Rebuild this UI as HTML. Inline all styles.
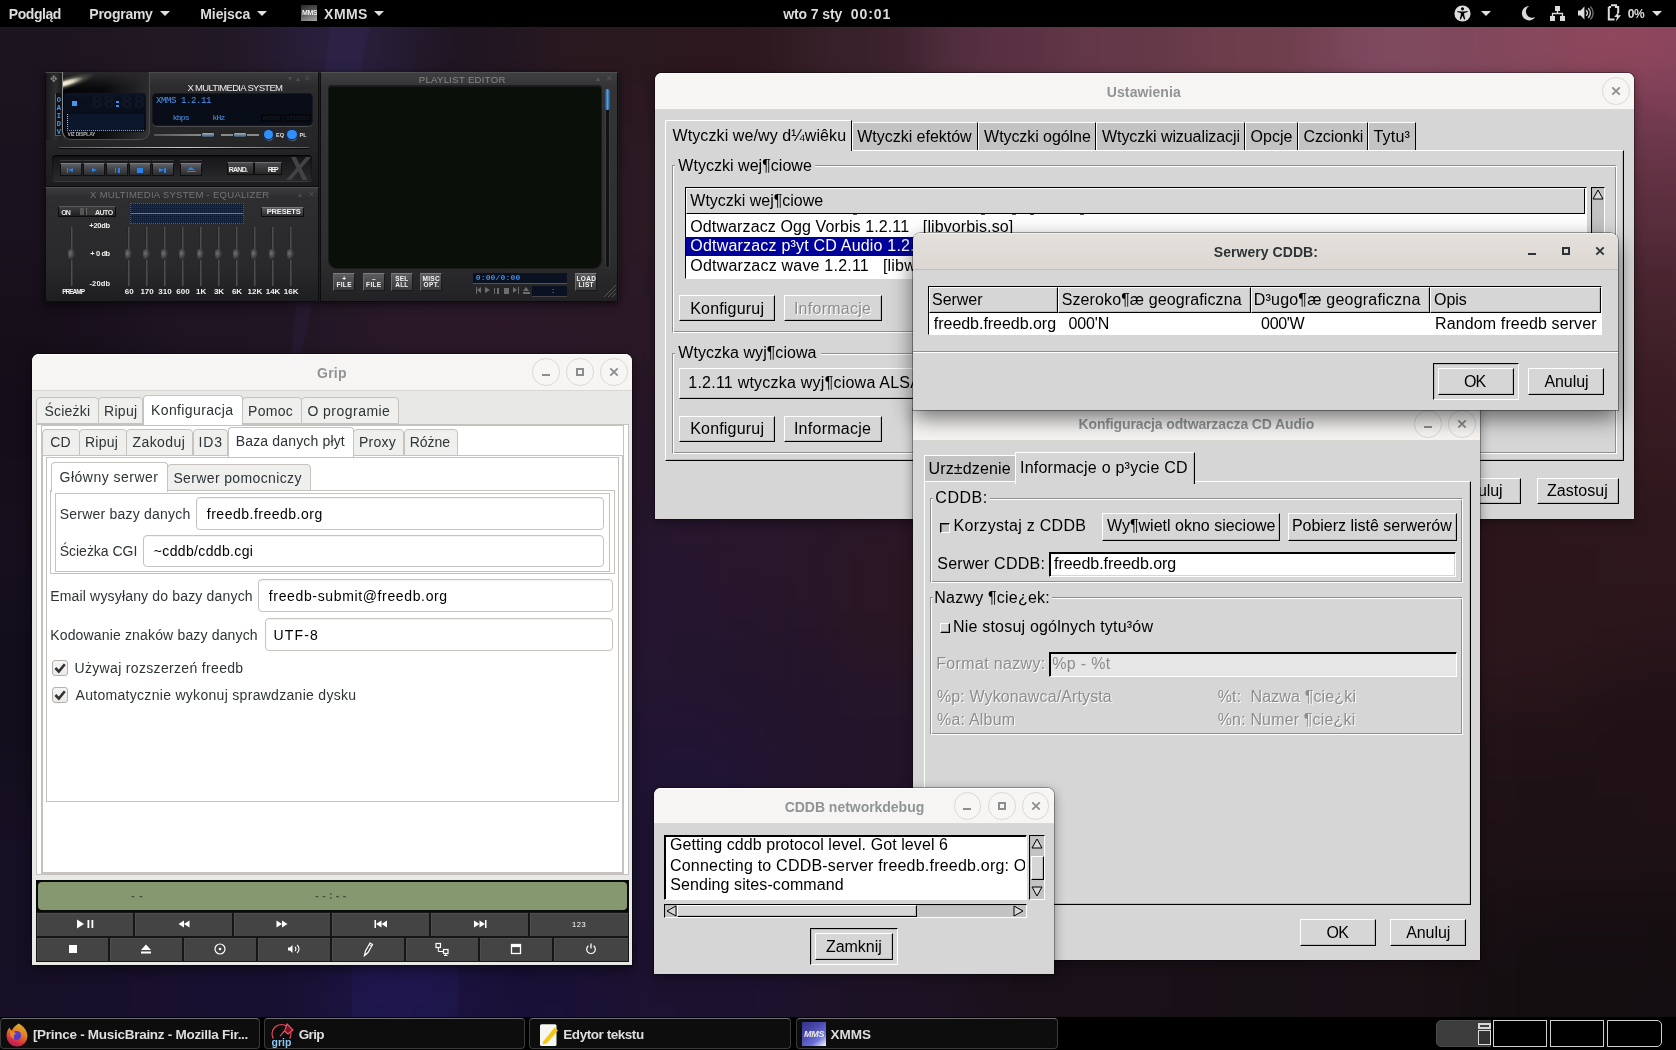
<!DOCTYPE html>
<html><head><meta charset="utf-8"><title>desktop</title>
<style>
*{box-sizing:border-box;margin:0;padding:0}
html,body{width:1676px;height:1050px;overflow:hidden;background:#1a1018}
body{font-family:"Liberation Sans",sans-serif;position:relative}
.abs,.abs *{position:absolute}
#desk{position:absolute;left:0;top:0;width:1676px;height:1050px;overflow:hidden;background:#1c1220;will-change:transform;transform:translateZ(0)}
/* ---------- top bar ---------- */
#top{position:absolute;left:0;top:0;width:1676px;height:27px;background:#000;color:#e9e9e9;font-weight:bold;font-size:14.5px}
#top span{position:absolute;top:5px;white-space:nowrap}
.tri{position:absolute;width:0;height:0;border-left:5px solid transparent;border-right:5px solid transparent;border-top:5px solid #e0e0e0}
/* ---------- bottom bar ---------- */
#bot{position:absolute;left:0;top:1017px;width:1676px;height:33px;background:#000}
.task{position:absolute;top:1px;height:31px;border:1px solid #3b3b3b;border-top-color:#6e6e6e;border-radius:4px;background:#0d0d0d;color:#e6e6e6;font-weight:bold;font-size:14px}
.task span{position:absolute;top:8px;white-space:nowrap}
/* ---------- generic windows ---------- */
.win{position:absolute;background:#d6d6d6;box-shadow:0 0 0 1px rgba(0,0,0,.35),0 6px 18px rgba(0,0,0,.45)}
.tb{position:absolute;left:0;top:0;right:0;background:#f6f5f4;border-radius:8px 8px 0 0;border-bottom:1px solid #dad6d2}
.tb .t{position:absolute;left:0;right:0;text-align:center;font-weight:bold;font-size:15px;color:#929595;white-space:nowrap}
.cb{position:absolute;width:24px;height:24px;border-radius:50%;border:1px solid #d6d1cd;background:#f6f5f4}
.g1{font-size:17px;color:#000;white-space:nowrap;position:absolute}
.btn1{position:absolute;background:#d6d6d6;border:1px solid;border-color:#fff #000 #000 #fff;box-shadow:inset -1px -1px 0 #8f8f8f;font-size:17px;text-align:center;white-space:nowrap;color:#000}
.frame{position:absolute;border:1px solid;border-color:#8f8f8f #fff #fff #8f8f8f;box-shadow:inset 1px 1px 0 #fff,1px 1px 0 #8f8f8f00}
.frame>b{position:absolute;top:-11px;left:4px;background:#d6d6d6;font-weight:normal;font-size:17px;padding:0 1px;white-space:nowrap;line-height:20px}
</style></head><body>
<div id="desk">

<svg style="position:absolute;left:0;top:0" width="1676" height="1050" viewBox="0 0 1676 1050"><defs><filter id="bgb" color-interpolation-filters="sRGB" x="-10%" y="-10%" width="120%" height="120%"><feGaussianBlur stdDeviation="26"/></filter></defs><rect width="1676" height="1050" fill="#1c1220"/><g filter="url(#bgb)"><rect x="-84" y="-84" width="43" height="43" fill="#1d1420"/><rect x="-42" y="-84" width="43" height="43" fill="#1d1420"/><rect x="0" y="-84" width="43" height="43" fill="#1d1520"/><rect x="42" y="-84" width="43" height="43" fill="#1e1521"/><rect x="84" y="-84" width="43" height="43" fill="#1f1623"/><rect x="126" y="-84" width="43" height="43" fill="#211725"/><rect x="168" y="-84" width="43" height="43" fill="#221826"/><rect x="210" y="-84" width="43" height="43" fill="#231929"/><rect x="252" y="-84" width="43" height="43" fill="#251a2e"/><rect x="294" y="-84" width="43" height="43" fill="#261c32"/><rect x="336" y="-84" width="43" height="43" fill="#261c33"/><rect x="378" y="-84" width="43" height="43" fill="#251a2f"/><rect x="420" y="-84" width="43" height="43" fill="#241929"/><rect x="462" y="-84" width="43" height="43" fill="#241825"/><rect x="504" y="-84" width="43" height="43" fill="#261824"/><rect x="546" y="-84" width="43" height="43" fill="#281822"/><rect x="588" y="-84" width="43" height="43" fill="#2a1921"/><rect x="630" y="-84" width="43" height="43" fill="#2b1921"/><rect x="672" y="-84" width="43" height="43" fill="#2d1921"/><rect x="714" y="-84" width="43" height="43" fill="#2f1a22"/><rect x="756" y="-84" width="43" height="43" fill="#331d25"/><rect x="798" y="-84" width="43" height="43" fill="#38202a"/><rect x="840" y="-84" width="43" height="43" fill="#3d232e"/><rect x="882" y="-84" width="43" height="43" fill="#432633"/><rect x="924" y="-84" width="43" height="43" fill="#4a2a38"/><rect x="966" y="-84" width="43" height="43" fill="#512d3c"/><rect x="1008" y="-84" width="43" height="43" fill="#563040"/><rect x="1050" y="-84" width="43" height="43" fill="#5b3343"/><rect x="1092" y="-84" width="43" height="43" fill="#5f3545"/><rect x="1134" y="-84" width="43" height="43" fill="#623746"/><rect x="1176" y="-84" width="43" height="43" fill="#663949"/><rect x="1218" y="-84" width="43" height="43" fill="#6a3c4b"/><rect x="1260" y="-84" width="43" height="43" fill="#6d3d4d"/><rect x="1302" y="-84" width="43" height="43" fill="#724052"/><rect x="1344" y="-84" width="43" height="43" fill="#774356"/><rect x="1386" y="-84" width="43" height="43" fill="#7a4458"/><rect x="1428" y="-84" width="43" height="43" fill="#7c4458"/><rect x="1470" y="-84" width="43" height="43" fill="#7f4458"/><rect x="1512" y="-84" width="43" height="43" fill="#824458"/><rect x="1554" y="-84" width="43" height="43" fill="#854458"/><rect x="1596" y="-84" width="43" height="43" fill="#874459"/><rect x="1638" y="-84" width="43" height="43" fill="#864459"/><rect x="1680" y="-84" width="43" height="43" fill="#844358"/><rect x="1722" y="-84" width="43" height="43" fill="#814157"/><rect x="-84" y="-42" width="43" height="43" fill="#1d141f"/><rect x="-42" y="-42" width="43" height="43" fill="#1c141f"/><rect x="0" y="-42" width="43" height="43" fill="#1c141f"/><rect x="42" y="-42" width="43" height="43" fill="#1d151f"/><rect x="84" y="-42" width="43" height="43" fill="#1f1622"/><rect x="126" y="-42" width="43" height="43" fill="#211724"/><rect x="168" y="-42" width="43" height="43" fill="#211825"/><rect x="210" y="-42" width="43" height="43" fill="#221927"/><rect x="252" y="-42" width="43" height="43" fill="#251b2f"/><rect x="294" y="-42" width="43" height="43" fill="#281e38"/><rect x="336" y="-42" width="43" height="43" fill="#281e39"/><rect x="378" y="-42" width="43" height="43" fill="#251b31"/><rect x="420" y="-42" width="43" height="43" fill="#221726"/><rect x="462" y="-42" width="43" height="43" fill="#211723"/><rect x="504" y="-42" width="43" height="43" fill="#251722"/><rect x="546" y="-42" width="43" height="43" fill="#291821"/><rect x="588" y="-42" width="43" height="43" fill="#2a1820"/><rect x="630" y="-42" width="43" height="43" fill="#2b1820"/><rect x="672" y="-42" width="43" height="43" fill="#2c181f"/><rect x="714" y="-42" width="43" height="43" fill="#2d191f"/><rect x="756" y="-42" width="43" height="43" fill="#301b23"/><rect x="798" y="-42" width="43" height="43" fill="#371f29"/><rect x="840" y="-42" width="43" height="43" fill="#3b222d"/><rect x="882" y="-42" width="43" height="43" fill="#402531"/><rect x="924" y="-42" width="43" height="43" fill="#4d2b3a"/><rect x="966" y="-42" width="43" height="43" fill="#542e3f"/><rect x="1008" y="-42" width="43" height="43" fill="#593142"/><rect x="1050" y="-42" width="43" height="43" fill="#5f3545"/><rect x="1092" y="-42" width="43" height="43" fill="#623747"/><rect x="1134" y="-42" width="43" height="43" fill="#643848"/><rect x="1176" y="-42" width="43" height="43" fill="#693b4a"/><rect x="1218" y="-42" width="43" height="43" fill="#6c3d4c"/><rect x="1260" y="-42" width="43" height="43" fill="#6e3e4d"/><rect x="1302" y="-42" width="43" height="43" fill="#744153"/><rect x="1344" y="-42" width="43" height="43" fill="#7b465a"/><rect x="1386" y="-42" width="43" height="43" fill="#7d475c"/><rect x="1428" y="-42" width="43" height="43" fill="#7e475b"/><rect x="1470" y="-42" width="43" height="43" fill="#81465a"/><rect x="1512" y="-42" width="43" height="43" fill="#84465a"/><rect x="1554" y="-42" width="43" height="43" fill="#88465a"/><rect x="1596" y="-42" width="43" height="43" fill="#8c465a"/><rect x="1638" y="-42" width="43" height="43" fill="#8b455a"/><rect x="1680" y="-42" width="43" height="43" fill="#87445a"/><rect x="1722" y="-42" width="43" height="43" fill="#834258"/><rect x="-84" y="0" width="43" height="43" fill="#1c141f"/><rect x="-42" y="0" width="43" height="43" fill="#1c141e"/><rect x="0" y="0" width="43" height="43" fill="#1c141e"/><rect x="42" y="0" width="43" height="43" fill="#1c141f"/><rect x="84" y="0" width="43" height="43" fill="#1e1621"/><rect x="126" y="0" width="43" height="43" fill="#211824"/><rect x="168" y="0" width="43" height="43" fill="#211824"/><rect x="210" y="0" width="43" height="43" fill="#211825"/><rect x="252" y="0" width="43" height="43" fill="#251b30"/><rect x="294" y="0" width="43" height="43" fill="#291f3d"/><rect x="336" y="0" width="43" height="43" fill="#2a203f"/><rect x="378" y="0" width="43" height="43" fill="#261c34"/><rect x="420" y="0" width="43" height="43" fill="#1f1622"/><rect x="462" y="0" width="43" height="43" fill="#1f1521"/><rect x="504" y="0" width="43" height="43" fill="#241721"/><rect x="546" y="0" width="43" height="43" fill="#29181f"/><rect x="588" y="0" width="43" height="43" fill="#2a181f"/><rect x="630" y="0" width="43" height="43" fill="#2a181f"/><rect x="672" y="0" width="43" height="43" fill="#2b171d"/><rect x="714" y="0" width="43" height="43" fill="#2b171d"/><rect x="756" y="0" width="43" height="43" fill="#2e1920"/><rect x="798" y="0" width="43" height="43" fill="#372029"/><rect x="840" y="0" width="43" height="43" fill="#39212b"/><rect x="882" y="0" width="43" height="43" fill="#3b222d"/><rect x="924" y="0" width="43" height="43" fill="#512d3d"/><rect x="966" y="0" width="43" height="43" fill="#573041"/><rect x="1008" y="0" width="43" height="43" fill="#5a3143"/><rect x="1050" y="0" width="43" height="43" fill="#623747"/><rect x="1092" y="0" width="43" height="43" fill="#643848"/><rect x="1134" y="0" width="43" height="43" fill="#653848"/><rect x="1176" y="0" width="43" height="43" fill="#6b3c4b"/><rect x="1218" y="0" width="43" height="43" fill="#6e3e4c"/><rect x="1260" y="0" width="43" height="43" fill="#6e3e4d"/><rect x="1302" y="0" width="43" height="43" fill="#754254"/><rect x="1344" y="0" width="43" height="43" fill="#7e495e"/><rect x="1386" y="0" width="43" height="43" fill="#804a5f"/><rect x="1428" y="0" width="43" height="43" fill="#7f485e"/><rect x="1470" y="0" width="43" height="43" fill="#83475b"/><rect x="1512" y="0" width="43" height="43" fill="#85485c"/><rect x="1554" y="0" width="43" height="43" fill="#88475b"/><rect x="1596" y="0" width="43" height="43" fill="#92485b"/><rect x="1638" y="0" width="43" height="43" fill="#8e465c"/><rect x="1680" y="0" width="43" height="43" fill="#88455c"/><rect x="1722" y="0" width="43" height="43" fill="#844259"/><rect x="-84" y="42" width="43" height="43" fill="#1c141e"/><rect x="-42" y="42" width="43" height="43" fill="#1c141e"/><rect x="0" y="42" width="43" height="43" fill="#1c141e"/><rect x="42" y="42" width="43" height="43" fill="#1c141e"/><rect x="84" y="42" width="43" height="43" fill="#1e1521"/><rect x="126" y="42" width="43" height="43" fill="#211824"/><rect x="168" y="42" width="43" height="43" fill="#211824"/><rect x="210" y="42" width="43" height="43" fill="#211825"/><rect x="252" y="42" width="43" height="43" fill="#251b2f"/><rect x="294" y="42" width="43" height="43" fill="#291f3d"/><rect x="336" y="42" width="43" height="43" fill="#2a203f"/><rect x="378" y="42" width="43" height="43" fill="#251c33"/><rect x="420" y="42" width="43" height="43" fill="#1e1521"/><rect x="462" y="42" width="43" height="43" fill="#1e1520"/><rect x="504" y="42" width="43" height="43" fill="#241721"/><rect x="546" y="42" width="43" height="43" fill="#2a181f"/><rect x="588" y="42" width="43" height="43" fill="#2a181f"/><rect x="630" y="42" width="43" height="43" fill="#2a181f"/><rect x="672" y="42" width="43" height="43" fill="#2b171c"/><rect x="714" y="42" width="43" height="43" fill="#2b171c"/><rect x="756" y="42" width="43" height="43" fill="#2e1920"/><rect x="798" y="42" width="43" height="43" fill="#372029"/><rect x="840" y="42" width="43" height="43" fill="#38212b"/><rect x="882" y="42" width="43" height="43" fill="#3a222c"/><rect x="924" y="42" width="43" height="43" fill="#522d3e"/><rect x="966" y="42" width="43" height="43" fill="#583042"/><rect x="1008" y="42" width="43" height="43" fill="#5a3143"/><rect x="1050" y="42" width="43" height="43" fill="#633747"/><rect x="1092" y="42" width="43" height="43" fill="#643848"/><rect x="1134" y="42" width="43" height="43" fill="#643848"/><rect x="1176" y="42" width="43" height="43" fill="#6b3c4b"/><rect x="1218" y="42" width="43" height="43" fill="#6e3e4c"/><rect x="1260" y="42" width="43" height="43" fill="#6e3e4c"/><rect x="1302" y="42" width="43" height="43" fill="#744254"/><rect x="1344" y="42" width="43" height="43" fill="#7f495f"/><rect x="1386" y="42" width="43" height="43" fill="#804a60"/><rect x="1428" y="42" width="43" height="43" fill="#7f485e"/><rect x="1470" y="42" width="43" height="43" fill="#83475b"/><rect x="1512" y="42" width="43" height="43" fill="#85485c"/><rect x="1554" y="42" width="43" height="43" fill="#87475b"/><rect x="1596" y="42" width="43" height="43" fill="#90475a"/><rect x="1638" y="42" width="43" height="43" fill="#89455d"/><rect x="1680" y="42" width="43" height="43" fill="#86445d"/><rect x="1722" y="42" width="43" height="43" fill="#814158"/><rect x="-84" y="84" width="43" height="43" fill="#1b131e"/><rect x="-42" y="84" width="43" height="43" fill="#1b131e"/><rect x="0" y="84" width="43" height="43" fill="#1c141e"/><rect x="42" y="84" width="43" height="43" fill="#1c141f"/><rect x="84" y="84" width="43" height="43" fill="#1d1521"/><rect x="126" y="84" width="43" height="43" fill="#201723"/><rect x="168" y="84" width="43" height="43" fill="#211824"/><rect x="210" y="84" width="43" height="43" fill="#221826"/><rect x="252" y="84" width="43" height="43" fill="#241a2c"/><rect x="294" y="84" width="43" height="43" fill="#261c34"/><rect x="336" y="84" width="43" height="43" fill="#271d38"/><rect x="378" y="84" width="43" height="43" fill="#251a2f"/><rect x="420" y="84" width="43" height="43" fill="#211724"/><rect x="462" y="84" width="43" height="43" fill="#211622"/><rect x="504" y="84" width="43" height="43" fill="#251722"/><rect x="546" y="84" width="43" height="43" fill="#291821"/><rect x="588" y="84" width="43" height="43" fill="#2a1820"/><rect x="630" y="84" width="43" height="43" fill="#2b1820"/><rect x="672" y="84" width="43" height="43" fill="#2b181f"/><rect x="714" y="84" width="43" height="43" fill="#2c181e"/><rect x="756" y="84" width="43" height="43" fill="#2f1a22"/><rect x="798" y="84" width="43" height="43" fill="#361f29"/><rect x="840" y="84" width="43" height="43" fill="#3a222c"/><rect x="882" y="84" width="43" height="43" fill="#3e242f"/><rect x="924" y="84" width="43" height="43" fill="#4d2b3a"/><rect x="966" y="84" width="43" height="43" fill="#552f40"/><rect x="1008" y="84" width="43" height="43" fill="#583141"/><rect x="1050" y="84" width="43" height="43" fill="#603545"/><rect x="1092" y="84" width="43" height="43" fill="#623747"/><rect x="1134" y="84" width="43" height="43" fill="#633847"/><rect x="1176" y="84" width="43" height="43" fill="#693b49"/><rect x="1218" y="84" width="43" height="43" fill="#6c3d4b"/><rect x="1260" y="84" width="43" height="43" fill="#6d3e4c"/><rect x="1302" y="84" width="43" height="43" fill="#724152"/><rect x="1344" y="84" width="43" height="43" fill="#7b465b"/><rect x="1386" y="84" width="43" height="43" fill="#7d485d"/><rect x="1428" y="84" width="43" height="43" fill="#7d465b"/><rect x="1470" y="84" width="43" height="43" fill="#7f4559"/><rect x="1512" y="84" width="43" height="43" fill="#824559"/><rect x="1554" y="84" width="43" height="43" fill="#804257"/><rect x="1596" y="84" width="43" height="43" fill="#793d53"/><rect x="1638" y="84" width="43" height="43" fill="#723a50"/><rect x="1680" y="84" width="43" height="43" fill="#7a3e54"/><rect x="1722" y="84" width="43" height="43" fill="#7a3e54"/><rect x="-84" y="126" width="43" height="43" fill="#1b131e"/><rect x="-42" y="126" width="43" height="43" fill="#1a121e"/><rect x="0" y="126" width="43" height="43" fill="#1a121e"/><rect x="42" y="126" width="43" height="43" fill="#1b121e"/><rect x="84" y="126" width="43" height="43" fill="#1c1420"/><rect x="126" y="126" width="43" height="43" fill="#1f1623"/><rect x="168" y="126" width="43" height="43" fill="#211725"/><rect x="210" y="126" width="43" height="43" fill="#221827"/><rect x="252" y="126" width="43" height="43" fill="#221827"/><rect x="294" y="126" width="43" height="43" fill="#231928"/><rect x="336" y="126" width="43" height="43" fill="#24192b"/><rect x="378" y="126" width="43" height="43" fill="#24192b"/><rect x="420" y="126" width="43" height="43" fill="#231827"/><rect x="462" y="126" width="43" height="43" fill="#241825"/><rect x="504" y="126" width="43" height="43" fill="#271824"/><rect x="546" y="126" width="43" height="43" fill="#291923"/><rect x="588" y="126" width="43" height="43" fill="#2b1923"/><rect x="630" y="126" width="43" height="43" fill="#2b1a23"/><rect x="672" y="126" width="43" height="43" fill="#2c1923"/><rect x="714" y="126" width="43" height="43" fill="#2d1a22"/><rect x="756" y="126" width="43" height="43" fill="#301b25"/><rect x="798" y="126" width="43" height="43" fill="#361f29"/><rect x="840" y="126" width="43" height="43" fill="#3b222d"/><rect x="882" y="126" width="43" height="43" fill="#412531"/><rect x="924" y="126" width="43" height="43" fill="#482837"/><rect x="966" y="126" width="43" height="43" fill="#4e2b3b"/><rect x="1008" y="126" width="43" height="43" fill="#532e3d"/><rect x="1050" y="126" width="43" height="43" fill="#583140"/><rect x="1092" y="126" width="43" height="43" fill="#5c3343"/><rect x="1134" y="126" width="43" height="43" fill="#5f3544"/><rect x="1176" y="126" width="43" height="43" fill="#623746"/><rect x="1218" y="126" width="43" height="43" fill="#663948"/><rect x="1260" y="126" width="43" height="43" fill="#673a49"/><rect x="1302" y="126" width="43" height="43" fill="#6a3c4c"/><rect x="1344" y="126" width="43" height="43" fill="#713f52"/><rect x="1386" y="126" width="43" height="43" fill="#754155"/><rect x="1428" y="126" width="43" height="43" fill="#764154"/><rect x="1470" y="126" width="43" height="43" fill="#774053"/><rect x="1512" y="126" width="43" height="43" fill="#773f52"/><rect x="1554" y="126" width="43" height="43" fill="#733b4e"/><rect x="1596" y="126" width="43" height="43" fill="#6e384b"/><rect x="1638" y="126" width="43" height="43" fill="#6b374a"/><rect x="1680" y="126" width="43" height="43" fill="#6d374b"/><rect x="1722" y="126" width="43" height="43" fill="#6f384c"/><rect x="-84" y="168" width="43" height="43" fill="#1a121e"/><rect x="-42" y="168" width="43" height="43" fill="#1a121e"/><rect x="0" y="168" width="43" height="43" fill="#1a121e"/><rect x="42" y="168" width="43" height="43" fill="#1a121e"/><rect x="84" y="168" width="43" height="43" fill="#1b131f"/><rect x="126" y="168" width="43" height="43" fill="#1e1522"/><rect x="168" y="168" width="43" height="43" fill="#201624"/><rect x="210" y="168" width="43" height="43" fill="#221726"/><rect x="252" y="168" width="43" height="43" fill="#221826"/><rect x="294" y="168" width="43" height="43" fill="#221826"/><rect x="336" y="168" width="43" height="43" fill="#231827"/><rect x="378" y="168" width="43" height="43" fill="#241828"/><rect x="420" y="168" width="43" height="43" fill="#251827"/><rect x="462" y="168" width="43" height="43" fill="#271826"/><rect x="504" y="168" width="43" height="43" fill="#281925"/><rect x="546" y="168" width="43" height="43" fill="#2a1924"/><rect x="588" y="168" width="43" height="43" fill="#2b1a24"/><rect x="630" y="168" width="43" height="43" fill="#2b1a24"/><rect x="672" y="168" width="43" height="43" fill="#2b1a24"/><rect x="714" y="168" width="43" height="43" fill="#2d1a25"/><rect x="756" y="168" width="43" height="43" fill="#301c26"/><rect x="798" y="168" width="43" height="43" fill="#351e29"/><rect x="840" y="168" width="43" height="43" fill="#3a212d"/><rect x="882" y="168" width="43" height="43" fill="#3e2330"/><rect x="924" y="168" width="43" height="43" fill="#422532"/><rect x="966" y="168" width="43" height="43" fill="#452633"/><rect x="1008" y="168" width="43" height="43" fill="#482735"/><rect x="1050" y="168" width="43" height="43" fill="#4d2a38"/><rect x="1092" y="168" width="43" height="43" fill="#522e3c"/><rect x="1134" y="168" width="43" height="43" fill="#56303e"/><rect x="1176" y="168" width="43" height="43" fill="#593140"/><rect x="1218" y="168" width="43" height="43" fill="#5a3140"/><rect x="1260" y="168" width="43" height="43" fill="#59313f"/><rect x="1302" y="168" width="43" height="43" fill="#5b3241"/><rect x="1344" y="168" width="43" height="43" fill="#613645"/><rect x="1386" y="168" width="43" height="43" fill="#67394a"/><rect x="1428" y="168" width="43" height="43" fill="#6b3a4b"/><rect x="1470" y="168" width="43" height="43" fill="#6c394b"/><rect x="1512" y="168" width="43" height="43" fill="#6a3748"/><rect x="1554" y="168" width="43" height="43" fill="#643445"/><rect x="1596" y="168" width="43" height="43" fill="#5d3040"/><rect x="1638" y="168" width="43" height="43" fill="#5a2e3e"/><rect x="1680" y="168" width="43" height="43" fill="#5e3040"/><rect x="1722" y="168" width="43" height="43" fill="#623243"/><rect x="-84" y="210" width="43" height="43" fill="#1a121e"/><rect x="-42" y="210" width="43" height="43" fill="#1a121e"/><rect x="0" y="210" width="43" height="43" fill="#1a121e"/><rect x="42" y="210" width="43" height="43" fill="#1a121e"/><rect x="84" y="210" width="43" height="43" fill="#1b121f"/><rect x="126" y="210" width="43" height="43" fill="#1d1421"/><rect x="168" y="210" width="43" height="43" fill="#1f1523"/><rect x="210" y="210" width="43" height="43" fill="#211725"/><rect x="252" y="210" width="43" height="43" fill="#221826"/><rect x="294" y="210" width="43" height="43" fill="#221826"/><rect x="336" y="210" width="43" height="43" fill="#231827"/><rect x="378" y="210" width="43" height="43" fill="#251827"/><rect x="420" y="210" width="43" height="43" fill="#271828"/><rect x="462" y="210" width="43" height="43" fill="#281827"/><rect x="504" y="210" width="43" height="43" fill="#291926"/><rect x="546" y="210" width="43" height="43" fill="#2a1925"/><rect x="588" y="210" width="43" height="43" fill="#2b1a24"/><rect x="630" y="210" width="43" height="43" fill="#2b1a24"/><rect x="672" y="210" width="43" height="43" fill="#2b1a25"/><rect x="714" y="210" width="43" height="43" fill="#2c1a25"/><rect x="756" y="210" width="43" height="43" fill="#2f1b27"/><rect x="798" y="210" width="43" height="43" fill="#331d2a"/><rect x="840" y="210" width="43" height="43" fill="#381f2c"/><rect x="882" y="210" width="43" height="43" fill="#3b212d"/><rect x="924" y="210" width="43" height="43" fill="#3c212d"/><rect x="966" y="210" width="43" height="43" fill="#3c212c"/><rect x="1008" y="210" width="43" height="43" fill="#3e212d"/><rect x="1050" y="210" width="43" height="43" fill="#422430"/><rect x="1092" y="210" width="43" height="43" fill="#492835"/><rect x="1134" y="210" width="43" height="43" fill="#4e2b38"/><rect x="1176" y="210" width="43" height="43" fill="#502c39"/><rect x="1218" y="210" width="43" height="43" fill="#4f2b38"/><rect x="1260" y="210" width="43" height="43" fill="#4d2a37"/><rect x="1302" y="210" width="43" height="43" fill="#4e2a37"/><rect x="1344" y="210" width="43" height="43" fill="#532d3a"/><rect x="1386" y="210" width="43" height="43" fill="#5a313f"/><rect x="1428" y="210" width="43" height="43" fill="#5f3342"/><rect x="1470" y="210" width="43" height="43" fill="#603242"/><rect x="1512" y="210" width="43" height="43" fill="#5e3040"/><rect x="1554" y="210" width="43" height="43" fill="#5a2e3d"/><rect x="1596" y="210" width="43" height="43" fill="#582d3c"/><rect x="1638" y="210" width="43" height="43" fill="#592d3d"/><rect x="1680" y="210" width="43" height="43" fill="#582d3c"/><rect x="1722" y="210" width="43" height="43" fill="#592d3c"/><rect x="-84" y="252" width="43" height="43" fill="#19111d"/><rect x="-42" y="252" width="43" height="43" fill="#18101c"/><rect x="0" y="252" width="43" height="43" fill="#18101b"/><rect x="42" y="252" width="43" height="43" fill="#18101b"/><rect x="84" y="252" width="43" height="43" fill="#19111d"/><rect x="126" y="252" width="43" height="43" fill="#1d1321"/><rect x="168" y="252" width="43" height="43" fill="#1e1422"/><rect x="210" y="252" width="43" height="43" fill="#1f1523"/><rect x="252" y="252" width="43" height="43" fill="#211625"/><rect x="294" y="252" width="43" height="43" fill="#221726"/><rect x="336" y="252" width="43" height="43" fill="#241827"/><rect x="378" y="252" width="43" height="43" fill="#281828"/><rect x="420" y="252" width="43" height="43" fill="#291828"/><rect x="462" y="252" width="43" height="43" fill="#291828"/><rect x="504" y="252" width="43" height="43" fill="#291827"/><rect x="546" y="252" width="43" height="43" fill="#2a1926"/><rect x="588" y="252" width="43" height="43" fill="#2a1926"/><rect x="630" y="252" width="43" height="43" fill="#2a1926"/><rect x="672" y="252" width="43" height="43" fill="#2b1926"/><rect x="714" y="252" width="43" height="43" fill="#2c1926"/><rect x="756" y="252" width="43" height="43" fill="#2e1a28"/><rect x="798" y="252" width="43" height="43" fill="#321c29"/><rect x="840" y="252" width="43" height="43" fill="#361e2b"/><rect x="882" y="252" width="43" height="43" fill="#391f2b"/><rect x="924" y="252" width="43" height="43" fill="#3a1f2b"/><rect x="966" y="252" width="43" height="43" fill="#3a1f2a"/><rect x="1008" y="252" width="43" height="43" fill="#3a1f2a"/><rect x="1050" y="252" width="43" height="43" fill="#3d212c"/><rect x="1092" y="252" width="43" height="43" fill="#422430"/><rect x="1134" y="252" width="43" height="43" fill="#482734"/><rect x="1176" y="252" width="43" height="43" fill="#4b2936"/><rect x="1218" y="252" width="43" height="43" fill="#4b2935"/><rect x="1260" y="252" width="43" height="43" fill="#4a2834"/><rect x="1302" y="252" width="43" height="43" fill="#4a2834"/><rect x="1344" y="252" width="43" height="43" fill="#4c2936"/><rect x="1386" y="252" width="43" height="43" fill="#512b39"/><rect x="1428" y="252" width="43" height="43" fill="#552d3b"/><rect x="1470" y="252" width="43" height="43" fill="#552d3a"/><rect x="1512" y="252" width="43" height="43" fill="#532b38"/><rect x="1554" y="252" width="43" height="43" fill="#4f2835"/><rect x="1596" y="252" width="43" height="43" fill="#492530"/><rect x="1638" y="252" width="43" height="43" fill="#47242e"/><rect x="1680" y="252" width="43" height="43" fill="#4a2631"/><rect x="1722" y="252" width="43" height="43" fill="#4f2834"/><rect x="-84" y="294" width="43" height="43" fill="#17101c"/><rect x="-42" y="294" width="43" height="43" fill="#170f1b"/><rect x="0" y="294" width="43" height="43" fill="#170f1a"/><rect x="42" y="294" width="43" height="43" fill="#170f1a"/><rect x="84" y="294" width="43" height="43" fill="#18101c"/><rect x="126" y="294" width="43" height="43" fill="#1d1321"/><rect x="168" y="294" width="43" height="43" fill="#1e1422"/><rect x="210" y="294" width="43" height="43" fill="#1e1422"/><rect x="252" y="294" width="43" height="43" fill="#1f1523"/><rect x="294" y="294" width="43" height="43" fill="#221625"/><rect x="336" y="294" width="43" height="43" fill="#261727"/><rect x="378" y="294" width="43" height="43" fill="#291828"/><rect x="420" y="294" width="43" height="43" fill="#2a1828"/><rect x="462" y="294" width="43" height="43" fill="#2a1828"/><rect x="504" y="294" width="43" height="43" fill="#2a1828"/><rect x="546" y="294" width="43" height="43" fill="#2a1827"/><rect x="588" y="294" width="43" height="43" fill="#2a1826"/><rect x="630" y="294" width="43" height="43" fill="#2a1826"/><rect x="672" y="294" width="43" height="43" fill="#2a1826"/><rect x="714" y="294" width="43" height="43" fill="#2b1927"/><rect x="756" y="294" width="43" height="43" fill="#2d1a28"/><rect x="798" y="294" width="43" height="43" fill="#301b29"/><rect x="840" y="294" width="43" height="43" fill="#341d2b"/><rect x="882" y="294" width="43" height="43" fill="#381e2b"/><rect x="924" y="294" width="43" height="43" fill="#3a1f2a"/><rect x="966" y="294" width="43" height="43" fill="#3a1f2a"/><rect x="1008" y="294" width="43" height="43" fill="#3a1f2a"/><rect x="1050" y="294" width="43" height="43" fill="#3b202b"/><rect x="1092" y="294" width="43" height="43" fill="#3f222e"/><rect x="1134" y="294" width="43" height="43" fill="#452532"/><rect x="1176" y="294" width="43" height="43" fill="#492734"/><rect x="1218" y="294" width="43" height="43" fill="#4a2834"/><rect x="1260" y="294" width="43" height="43" fill="#4a2834"/><rect x="1302" y="294" width="43" height="43" fill="#4a2834"/><rect x="1344" y="294" width="43" height="43" fill="#4b2834"/><rect x="1386" y="294" width="43" height="43" fill="#4c2935"/><rect x="1428" y="294" width="43" height="43" fill="#4d2935"/><rect x="1470" y="294" width="43" height="43" fill="#4d2834"/><rect x="1512" y="294" width="43" height="43" fill="#4a2632"/><rect x="1554" y="294" width="43" height="43" fill="#47242f"/><rect x="1596" y="294" width="43" height="43" fill="#45232d"/><rect x="1638" y="294" width="43" height="43" fill="#45232d"/><rect x="1680" y="294" width="43" height="43" fill="#45232d"/><rect x="1722" y="294" width="43" height="43" fill="#48242f"/><rect x="-84" y="336" width="43" height="43" fill="#160f1b"/><rect x="-42" y="336" width="43" height="43" fill="#150f1a"/><rect x="0" y="336" width="43" height="43" fill="#160f1a"/><rect x="42" y="336" width="43" height="43" fill="#170f1a"/><rect x="84" y="336" width="43" height="43" fill="#18101c"/><rect x="126" y="336" width="43" height="43" fill="#1c1321"/><rect x="168" y="336" width="43" height="43" fill="#1e1422"/><rect x="210" y="336" width="43" height="43" fill="#1e1422"/><rect x="252" y="336" width="43" height="43" fill="#1f1523"/><rect x="294" y="336" width="43" height="43" fill="#221625"/><rect x="336" y="336" width="43" height="43" fill="#261727"/><rect x="378" y="336" width="43" height="43" fill="#291828"/><rect x="420" y="336" width="43" height="43" fill="#2a1828"/><rect x="462" y="336" width="43" height="43" fill="#2a1828"/><rect x="504" y="336" width="43" height="43" fill="#291828"/><rect x="546" y="336" width="43" height="43" fill="#291827"/><rect x="588" y="336" width="43" height="43" fill="#2a1826"/><rect x="630" y="336" width="43" height="43" fill="#2a1826"/><rect x="672" y="336" width="43" height="43" fill="#2a1827"/><rect x="714" y="336" width="43" height="43" fill="#2a1828"/><rect x="756" y="336" width="43" height="43" fill="#2b1929"/><rect x="798" y="336" width="43" height="43" fill="#2e1a29"/><rect x="840" y="336" width="43" height="43" fill="#321c2a"/><rect x="882" y="336" width="43" height="43" fill="#361d2b"/><rect x="924" y="336" width="43" height="43" fill="#391f2a"/><rect x="966" y="336" width="43" height="43" fill="#3a1f2a"/><rect x="1008" y="336" width="43" height="43" fill="#3a1f2a"/><rect x="1050" y="336" width="43" height="43" fill="#3b202b"/><rect x="1092" y="336" width="43" height="43" fill="#3d212d"/><rect x="1134" y="336" width="43" height="43" fill="#412330"/><rect x="1176" y="336" width="43" height="43" fill="#462632"/><rect x="1218" y="336" width="43" height="43" fill="#482733"/><rect x="1260" y="336" width="43" height="43" fill="#4a2834"/><rect x="1302" y="336" width="43" height="43" fill="#4a2834"/><rect x="1344" y="336" width="43" height="43" fill="#492733"/><rect x="1386" y="336" width="43" height="43" fill="#482632"/><rect x="1428" y="336" width="43" height="43" fill="#462530"/><rect x="1470" y="336" width="43" height="43" fill="#45232e"/><rect x="1512" y="336" width="43" height="43" fill="#43222c"/><rect x="1554" y="336" width="43" height="43" fill="#412029"/><rect x="1596" y="336" width="43" height="43" fill="#3e1f27"/><rect x="1638" y="336" width="43" height="43" fill="#3d1e26"/><rect x="1680" y="336" width="43" height="43" fill="#3e1f28"/><rect x="1722" y="336" width="43" height="43" fill="#41212a"/><rect x="-84" y="378" width="43" height="43" fill="#150f1b"/><rect x="-42" y="378" width="43" height="43" fill="#140e1a"/><rect x="0" y="378" width="43" height="43" fill="#140e1a"/><rect x="42" y="378" width="43" height="43" fill="#150f1a"/><rect x="84" y="378" width="43" height="43" fill="#18101c"/><rect x="126" y="378" width="43" height="43" fill="#1b1220"/><rect x="168" y="378" width="43" height="43" fill="#1d1422"/><rect x="210" y="378" width="43" height="43" fill="#1e1422"/><rect x="252" y="378" width="43" height="43" fill="#1f1524"/><rect x="294" y="378" width="43" height="43" fill="#221626"/><rect x="336" y="378" width="43" height="43" fill="#251727"/><rect x="378" y="378" width="43" height="43" fill="#281728"/><rect x="420" y="378" width="43" height="43" fill="#291828"/><rect x="462" y="378" width="43" height="43" fill="#291828"/><rect x="504" y="378" width="43" height="43" fill="#291728"/><rect x="546" y="378" width="43" height="43" fill="#281729"/><rect x="588" y="378" width="43" height="43" fill="#281729"/><rect x="630" y="378" width="43" height="43" fill="#281729"/><rect x="672" y="378" width="43" height="43" fill="#281729"/><rect x="714" y="378" width="43" height="43" fill="#291729"/><rect x="756" y="378" width="43" height="43" fill="#2a1829"/><rect x="798" y="378" width="43" height="43" fill="#2c1929"/><rect x="840" y="378" width="43" height="43" fill="#2f1a2a"/><rect x="882" y="378" width="43" height="43" fill="#321b2a"/><rect x="924" y="378" width="43" height="43" fill="#361d2a"/><rect x="966" y="378" width="43" height="43" fill="#381e2a"/><rect x="1008" y="378" width="43" height="43" fill="#381e2b"/><rect x="1050" y="378" width="43" height="43" fill="#391f2b"/><rect x="1092" y="378" width="43" height="43" fill="#3a202c"/><rect x="1134" y="378" width="43" height="43" fill="#3d212d"/><rect x="1176" y="378" width="43" height="43" fill="#40232f"/><rect x="1218" y="378" width="43" height="43" fill="#442531"/><rect x="1260" y="378" width="43" height="43" fill="#462632"/><rect x="1302" y="378" width="43" height="43" fill="#462631"/><rect x="1344" y="378" width="43" height="43" fill="#442530"/><rect x="1386" y="378" width="43" height="43" fill="#41232d"/><rect x="1428" y="378" width="43" height="43" fill="#3f212a"/><rect x="1470" y="378" width="43" height="43" fill="#3d1f28"/><rect x="1512" y="378" width="43" height="43" fill="#3c1e27"/><rect x="1554" y="378" width="43" height="43" fill="#3b1d25"/><rect x="1596" y="378" width="43" height="43" fill="#391c23"/><rect x="1638" y="378" width="43" height="43" fill="#381b22"/><rect x="1680" y="378" width="43" height="43" fill="#391c23"/><rect x="1722" y="378" width="43" height="43" fill="#3c1e26"/><rect x="-84" y="420" width="43" height="43" fill="#150f1b"/><rect x="-42" y="420" width="43" height="43" fill="#150e1a"/><rect x="0" y="420" width="43" height="43" fill="#140e1a"/><rect x="42" y="420" width="43" height="43" fill="#150f1b"/><rect x="84" y="420" width="43" height="43" fill="#17101d"/><rect x="126" y="420" width="43" height="43" fill="#1a1220"/><rect x="168" y="420" width="43" height="43" fill="#1d1322"/><rect x="210" y="420" width="43" height="43" fill="#1e1423"/><rect x="252" y="420" width="43" height="43" fill="#1f1525"/><rect x="294" y="420" width="43" height="43" fill="#211527"/><rect x="336" y="420" width="43" height="43" fill="#241628"/><rect x="378" y="420" width="43" height="43" fill="#261728"/><rect x="420" y="420" width="43" height="43" fill="#271729"/><rect x="462" y="420" width="43" height="43" fill="#281729"/><rect x="504" y="420" width="43" height="43" fill="#281729"/><rect x="546" y="420" width="43" height="43" fill="#27162a"/><rect x="588" y="420" width="43" height="43" fill="#27162a"/><rect x="630" y="420" width="43" height="43" fill="#27162a"/><rect x="672" y="420" width="43" height="43" fill="#27162a"/><rect x="714" y="420" width="43" height="43" fill="#28172a"/><rect x="756" y="420" width="43" height="43" fill="#29172a"/><rect x="798" y="420" width="43" height="43" fill="#2a1729"/><rect x="840" y="420" width="43" height="43" fill="#2c1829"/><rect x="882" y="420" width="43" height="43" fill="#2e1929"/><rect x="924" y="420" width="43" height="43" fill="#311b29"/><rect x="966" y="420" width="43" height="43" fill="#331c29"/><rect x="1008" y="420" width="43" height="43" fill="#351d2a"/><rect x="1050" y="420" width="43" height="43" fill="#351d2a"/><rect x="1092" y="420" width="43" height="43" fill="#361d29"/><rect x="1134" y="420" width="43" height="43" fill="#371e29"/><rect x="1176" y="420" width="43" height="43" fill="#391f2a"/><rect x="1218" y="420" width="43" height="43" fill="#3b202b"/><rect x="1260" y="420" width="43" height="43" fill="#3e212c"/><rect x="1302" y="420" width="43" height="43" fill="#3e212c"/><rect x="1344" y="420" width="43" height="43" fill="#3d202a"/><rect x="1386" y="420" width="43" height="43" fill="#3a1e27"/><rect x="1428" y="420" width="43" height="43" fill="#361c24"/><rect x="1470" y="420" width="43" height="43" fill="#351b23"/><rect x="1512" y="420" width="43" height="43" fill="#351b22"/><rect x="1554" y="420" width="43" height="43" fill="#361b22"/><rect x="1596" y="420" width="43" height="43" fill="#371b22"/><rect x="1638" y="420" width="43" height="43" fill="#371b22"/><rect x="1680" y="420" width="43" height="43" fill="#371b22"/><rect x="1722" y="420" width="43" height="43" fill="#381c23"/><rect x="-84" y="462" width="43" height="43" fill="#160f1c"/><rect x="-42" y="462" width="43" height="43" fill="#150f1b"/><rect x="0" y="462" width="43" height="43" fill="#150f1b"/><rect x="42" y="462" width="43" height="43" fill="#160f1c"/><rect x="84" y="462" width="43" height="43" fill="#18101e"/><rect x="126" y="462" width="43" height="43" fill="#1a1221"/><rect x="168" y="462" width="43" height="43" fill="#1c1323"/><rect x="210" y="462" width="43" height="43" fill="#1e1426"/><rect x="252" y="462" width="43" height="43" fill="#1f1427"/><rect x="294" y="462" width="43" height="43" fill="#201529"/><rect x="336" y="462" width="43" height="43" fill="#221629"/><rect x="378" y="462" width="43" height="43" fill="#24162a"/><rect x="420" y="462" width="43" height="43" fill="#25162a"/><rect x="462" y="462" width="43" height="43" fill="#26172a"/><rect x="504" y="462" width="43" height="43" fill="#27162a"/><rect x="546" y="462" width="43" height="43" fill="#27162a"/><rect x="588" y="462" width="43" height="43" fill="#27162a"/><rect x="630" y="462" width="43" height="43" fill="#27162a"/><rect x="672" y="462" width="43" height="43" fill="#27162a"/><rect x="714" y="462" width="43" height="43" fill="#28162a"/><rect x="756" y="462" width="43" height="43" fill="#28162a"/><rect x="798" y="462" width="43" height="43" fill="#291629"/><rect x="840" y="462" width="43" height="43" fill="#2a1728"/><rect x="882" y="462" width="43" height="43" fill="#2b1727"/><rect x="924" y="462" width="43" height="43" fill="#2c1827"/><rect x="966" y="462" width="43" height="43" fill="#2e1928"/><rect x="1008" y="462" width="43" height="43" fill="#301a28"/><rect x="1050" y="462" width="43" height="43" fill="#311b27"/><rect x="1092" y="462" width="43" height="43" fill="#311a26"/><rect x="1134" y="462" width="43" height="43" fill="#301a24"/><rect x="1176" y="462" width="43" height="43" fill="#311a24"/><rect x="1218" y="462" width="43" height="43" fill="#321b25"/><rect x="1260" y="462" width="43" height="43" fill="#351c26"/><rect x="1302" y="462" width="43" height="43" fill="#371d27"/><rect x="1344" y="462" width="43" height="43" fill="#361c25"/><rect x="1386" y="462" width="43" height="43" fill="#331a22"/><rect x="1428" y="462" width="43" height="43" fill="#30181f"/><rect x="1470" y="462" width="43" height="43" fill="#2f181e"/><rect x="1512" y="462" width="43" height="43" fill="#2f181e"/><rect x="1554" y="462" width="43" height="43" fill="#30181f"/><rect x="1596" y="462" width="43" height="43" fill="#2f181e"/><rect x="1638" y="462" width="43" height="43" fill="#2e181d"/><rect x="1680" y="462" width="43" height="43" fill="#30181e"/><rect x="1722" y="462" width="43" height="43" fill="#331a20"/><rect x="-84" y="504" width="43" height="43" fill="#17101d"/><rect x="-42" y="504" width="43" height="43" fill="#160f1d"/><rect x="0" y="504" width="43" height="43" fill="#160f1d"/><rect x="42" y="504" width="43" height="43" fill="#17101e"/><rect x="84" y="504" width="43" height="43" fill="#191120"/><rect x="126" y="504" width="43" height="43" fill="#1a1223"/><rect x="168" y="504" width="43" height="43" fill="#1c1326"/><rect x="210" y="504" width="43" height="43" fill="#1d1429"/><rect x="252" y="504" width="43" height="43" fill="#1e142b"/><rect x="294" y="504" width="43" height="43" fill="#1f142c"/><rect x="336" y="504" width="43" height="43" fill="#20152c"/><rect x="378" y="504" width="43" height="43" fill="#22152c"/><rect x="420" y="504" width="43" height="43" fill="#24162b"/><rect x="462" y="504" width="43" height="43" fill="#25162c"/><rect x="504" y="504" width="43" height="43" fill="#26162c"/><rect x="546" y="504" width="43" height="43" fill="#26162c"/><rect x="588" y="504" width="43" height="43" fill="#26162d"/><rect x="630" y="504" width="43" height="43" fill="#26162c"/><rect x="672" y="504" width="43" height="43" fill="#27162c"/><rect x="714" y="504" width="43" height="43" fill="#28162a"/><rect x="756" y="504" width="43" height="43" fill="#28162a"/><rect x="798" y="504" width="43" height="43" fill="#281629"/><rect x="840" y="504" width="43" height="43" fill="#291626"/><rect x="882" y="504" width="43" height="43" fill="#2a1625"/><rect x="924" y="504" width="43" height="43" fill="#2a1725"/><rect x="966" y="504" width="43" height="43" fill="#2b1826"/><rect x="1008" y="504" width="43" height="43" fill="#2d1826"/><rect x="1050" y="504" width="43" height="43" fill="#2e1925"/><rect x="1092" y="504" width="43" height="43" fill="#2d1822"/><rect x="1134" y="504" width="43" height="43" fill="#2c1720"/><rect x="1176" y="504" width="43" height="43" fill="#2c1720"/><rect x="1218" y="504" width="43" height="43" fill="#2c1720"/><rect x="1260" y="504" width="43" height="43" fill="#2f1922"/><rect x="1302" y="504" width="43" height="43" fill="#311a23"/><rect x="1344" y="504" width="43" height="43" fill="#311a22"/><rect x="1386" y="504" width="43" height="43" fill="#2f181f"/><rect x="1428" y="504" width="43" height="43" fill="#2d171d"/><rect x="1470" y="504" width="43" height="43" fill="#2c161c"/><rect x="1512" y="504" width="43" height="43" fill="#2c161c"/><rect x="1554" y="504" width="43" height="43" fill="#2d171d"/><rect x="1596" y="504" width="43" height="43" fill="#2d171c"/><rect x="1638" y="504" width="43" height="43" fill="#2d171c"/><rect x="1680" y="504" width="43" height="43" fill="#2e171d"/><rect x="1722" y="504" width="43" height="43" fill="#30181e"/><rect x="-84" y="546" width="43" height="43" fill="#160f1e"/><rect x="-42" y="546" width="43" height="43" fill="#160f1e"/><rect x="0" y="546" width="43" height="43" fill="#160f1e"/><rect x="42" y="546" width="43" height="43" fill="#17101f"/><rect x="84" y="546" width="43" height="43" fill="#181122"/><rect x="126" y="546" width="43" height="43" fill="#1a1225"/><rect x="168" y="546" width="43" height="43" fill="#1c1329"/><rect x="210" y="546" width="43" height="43" fill="#1c142c"/><rect x="252" y="546" width="43" height="43" fill="#1d142e"/><rect x="294" y="546" width="43" height="43" fill="#1d142f"/><rect x="336" y="546" width="43" height="43" fill="#1e142e"/><rect x="378" y="546" width="43" height="43" fill="#20152d"/><rect x="420" y="546" width="43" height="43" fill="#22152d"/><rect x="462" y="546" width="43" height="43" fill="#24152d"/><rect x="504" y="546" width="43" height="43" fill="#25162d"/><rect x="546" y="546" width="43" height="43" fill="#25152e"/><rect x="588" y="546" width="43" height="43" fill="#25152f"/><rect x="630" y="546" width="43" height="43" fill="#251530"/><rect x="672" y="546" width="43" height="43" fill="#26152e"/><rect x="714" y="546" width="43" height="43" fill="#28162b"/><rect x="756" y="546" width="43" height="43" fill="#28162a"/><rect x="798" y="546" width="43" height="43" fill="#281629"/><rect x="840" y="546" width="43" height="43" fill="#2a1624"/><rect x="882" y="546" width="43" height="43" fill="#2a1623"/><rect x="924" y="546" width="43" height="43" fill="#2a1623"/><rect x="966" y="546" width="43" height="43" fill="#2a1725"/><rect x="1008" y="546" width="43" height="43" fill="#2b1725"/><rect x="1050" y="546" width="43" height="43" fill="#2b1723"/><rect x="1092" y="546" width="43" height="43" fill="#2b1720"/><rect x="1134" y="546" width="43" height="43" fill="#2a161f"/><rect x="1176" y="546" width="43" height="43" fill="#2a161e"/><rect x="1218" y="546" width="43" height="43" fill="#2a161e"/><rect x="1260" y="546" width="43" height="43" fill="#2c1720"/><rect x="1302" y="546" width="43" height="43" fill="#2e1821"/><rect x="1344" y="546" width="43" height="43" fill="#2e1820"/><rect x="1386" y="546" width="43" height="43" fill="#2d171e"/><rect x="1428" y="546" width="43" height="43" fill="#2c161c"/><rect x="1470" y="546" width="43" height="43" fill="#2c161c"/><rect x="1512" y="546" width="43" height="43" fill="#2c161c"/><rect x="1554" y="546" width="43" height="43" fill="#2b161b"/><rect x="1596" y="546" width="43" height="43" fill="#2d171c"/><rect x="1638" y="546" width="43" height="43" fill="#2d171c"/><rect x="1680" y="546" width="43" height="43" fill="#2e171d"/><rect x="1722" y="546" width="43" height="43" fill="#2f181e"/><rect x="-84" y="588" width="43" height="43" fill="#150f1e"/><rect x="-42" y="588" width="43" height="43" fill="#140f1d"/><rect x="0" y="588" width="43" height="43" fill="#140f1d"/><rect x="42" y="588" width="43" height="43" fill="#150f1f"/><rect x="84" y="588" width="43" height="43" fill="#171021"/><rect x="126" y="588" width="43" height="43" fill="#191226"/><rect x="168" y="588" width="43" height="43" fill="#1b132b"/><rect x="210" y="588" width="43" height="43" fill="#1c142e"/><rect x="252" y="588" width="43" height="43" fill="#1c1430"/><rect x="294" y="588" width="43" height="43" fill="#1c1430"/><rect x="336" y="588" width="43" height="43" fill="#1d1430"/><rect x="378" y="588" width="43" height="43" fill="#1e142f"/><rect x="420" y="588" width="43" height="43" fill="#21152e"/><rect x="462" y="588" width="43" height="43" fill="#23152e"/><rect x="504" y="588" width="43" height="43" fill="#24152e"/><rect x="546" y="588" width="43" height="43" fill="#25152f"/><rect x="588" y="588" width="43" height="43" fill="#251530"/><rect x="630" y="588" width="43" height="43" fill="#251530"/><rect x="672" y="588" width="43" height="43" fill="#25152f"/><rect x="714" y="588" width="43" height="43" fill="#26152c"/><rect x="756" y="588" width="43" height="43" fill="#27162a"/><rect x="798" y="588" width="43" height="43" fill="#281628"/><rect x="840" y="588" width="43" height="43" fill="#2a1623"/><rect x="882" y="588" width="43" height="43" fill="#2a1622"/><rect x="924" y="588" width="43" height="43" fill="#2a1623"/><rect x="966" y="588" width="43" height="43" fill="#291625"/><rect x="1008" y="588" width="43" height="43" fill="#291725"/><rect x="1050" y="588" width="43" height="43" fill="#2a1723"/><rect x="1092" y="588" width="43" height="43" fill="#2a1620"/><rect x="1134" y="588" width="43" height="43" fill="#2a161e"/><rect x="1176" y="588" width="43" height="43" fill="#2a161e"/><rect x="1218" y="588" width="43" height="43" fill="#2a161e"/><rect x="1260" y="588" width="43" height="43" fill="#2b171f"/><rect x="1302" y="588" width="43" height="43" fill="#2c1720"/><rect x="1344" y="588" width="43" height="43" fill="#2d171f"/><rect x="1386" y="588" width="43" height="43" fill="#2c171d"/><rect x="1428" y="588" width="43" height="43" fill="#2c161c"/><rect x="1470" y="588" width="43" height="43" fill="#2c161c"/><rect x="1512" y="588" width="43" height="43" fill="#2b161b"/><rect x="1554" y="588" width="43" height="43" fill="#2b161b"/><rect x="1596" y="588" width="43" height="43" fill="#2b161b"/><rect x="1638" y="588" width="43" height="43" fill="#2c161c"/><rect x="1680" y="588" width="43" height="43" fill="#2c171c"/><rect x="1722" y="588" width="43" height="43" fill="#2c171d"/><rect x="-84" y="630" width="43" height="43" fill="#140f1d"/><rect x="-42" y="630" width="43" height="43" fill="#130e1c"/><rect x="0" y="630" width="43" height="43" fill="#130e1c"/><rect x="42" y="630" width="43" height="43" fill="#140e1d"/><rect x="84" y="630" width="43" height="43" fill="#160f20"/><rect x="126" y="630" width="43" height="43" fill="#191126"/><rect x="168" y="630" width="43" height="43" fill="#1b132c"/><rect x="210" y="630" width="43" height="43" fill="#1c142f"/><rect x="252" y="630" width="43" height="43" fill="#1c1430"/><rect x="294" y="630" width="43" height="43" fill="#1c1430"/><rect x="336" y="630" width="43" height="43" fill="#1c1430"/><rect x="378" y="630" width="43" height="43" fill="#1d1430"/><rect x="420" y="630" width="43" height="43" fill="#20142f"/><rect x="462" y="630" width="43" height="43" fill="#22152f"/><rect x="504" y="630" width="43" height="43" fill="#23152f"/><rect x="546" y="630" width="43" height="43" fill="#24152f"/><rect x="588" y="630" width="43" height="43" fill="#251530"/><rect x="630" y="630" width="43" height="43" fill="#251530"/><rect x="672" y="630" width="43" height="43" fill="#24152f"/><rect x="714" y="630" width="43" height="43" fill="#24152d"/><rect x="756" y="630" width="43" height="43" fill="#24142c"/><rect x="798" y="630" width="43" height="43" fill="#25152a"/><rect x="840" y="630" width="43" height="43" fill="#281625"/><rect x="882" y="630" width="43" height="43" fill="#291624"/><rect x="924" y="630" width="43" height="43" fill="#281625"/><rect x="966" y="630" width="43" height="43" fill="#281625"/><rect x="1008" y="630" width="43" height="43" fill="#281625"/><rect x="1050" y="630" width="43" height="43" fill="#291623"/><rect x="1092" y="630" width="43" height="43" fill="#291620"/><rect x="1134" y="630" width="43" height="43" fill="#2a161f"/><rect x="1176" y="630" width="43" height="43" fill="#2a161e"/><rect x="1218" y="630" width="43" height="43" fill="#2a161e"/><rect x="1260" y="630" width="43" height="43" fill="#2a161f"/><rect x="1302" y="630" width="43" height="43" fill="#2a171f"/><rect x="1344" y="630" width="43" height="43" fill="#2b171e"/><rect x="1386" y="630" width="43" height="43" fill="#2b161d"/><rect x="1428" y="630" width="43" height="43" fill="#2b161c"/><rect x="1470" y="630" width="43" height="43" fill="#2b161c"/><rect x="1512" y="630" width="43" height="43" fill="#2b161b"/><rect x="1554" y="630" width="43" height="43" fill="#2a161b"/><rect x="1596" y="630" width="43" height="43" fill="#29151a"/><rect x="1638" y="630" width="43" height="43" fill="#27141a"/><rect x="1680" y="630" width="43" height="43" fill="#27151a"/><rect x="1722" y="630" width="43" height="43" fill="#28151b"/><rect x="-84" y="672" width="43" height="43" fill="#140e1d"/><rect x="-42" y="672" width="43" height="43" fill="#130e1c"/><rect x="0" y="672" width="43" height="43" fill="#130e1c"/><rect x="42" y="672" width="43" height="43" fill="#130e1c"/><rect x="84" y="672" width="43" height="43" fill="#150f1f"/><rect x="126" y="672" width="43" height="43" fill="#181125"/><rect x="168" y="672" width="43" height="43" fill="#1b132c"/><rect x="210" y="672" width="43" height="43" fill="#1c142f"/><rect x="252" y="672" width="43" height="43" fill="#1c1430"/><rect x="294" y="672" width="43" height="43" fill="#1c1430"/><rect x="336" y="672" width="43" height="43" fill="#1c1430"/><rect x="378" y="672" width="43" height="43" fill="#1d1431"/><rect x="420" y="672" width="43" height="43" fill="#1f1431"/><rect x="462" y="672" width="43" height="43" fill="#201431"/><rect x="504" y="672" width="43" height="43" fill="#221530"/><rect x="546" y="672" width="43" height="43" fill="#231530"/><rect x="588" y="672" width="43" height="43" fill="#231530"/><rect x="630" y="672" width="43" height="43" fill="#231531"/><rect x="672" y="672" width="43" height="43" fill="#231430"/><rect x="714" y="672" width="43" height="43" fill="#23142d"/><rect x="756" y="672" width="43" height="43" fill="#23142c"/><rect x="798" y="672" width="43" height="43" fill="#23142c"/><rect x="840" y="672" width="43" height="43" fill="#25152a"/><rect x="882" y="672" width="43" height="43" fill="#251528"/><rect x="924" y="672" width="43" height="43" fill="#261528"/><rect x="966" y="672" width="43" height="43" fill="#261527"/><rect x="1008" y="672" width="43" height="43" fill="#261525"/><rect x="1050" y="672" width="43" height="43" fill="#271523"/><rect x="1092" y="672" width="43" height="43" fill="#271520"/><rect x="1134" y="672" width="43" height="43" fill="#28151f"/><rect x="1176" y="672" width="43" height="43" fill="#28161e"/><rect x="1218" y="672" width="43" height="43" fill="#28161e"/><rect x="1260" y="672" width="43" height="43" fill="#28161e"/><rect x="1302" y="672" width="43" height="43" fill="#28161e"/><rect x="1344" y="672" width="43" height="43" fill="#29161d"/><rect x="1386" y="672" width="43" height="43" fill="#29161c"/><rect x="1428" y="672" width="43" height="43" fill="#28151b"/><rect x="1470" y="672" width="43" height="43" fill="#27151a"/><rect x="1512" y="672" width="43" height="43" fill="#27141a"/><rect x="1554" y="672" width="43" height="43" fill="#251419"/><rect x="1596" y="672" width="43" height="43" fill="#221218"/><rect x="1638" y="672" width="43" height="43" fill="#211217"/><rect x="1680" y="672" width="43" height="43" fill="#211217"/><rect x="1722" y="672" width="43" height="43" fill="#241319"/><rect x="-84" y="714" width="43" height="43" fill="#140e1d"/><rect x="-42" y="714" width="43" height="43" fill="#130e1c"/><rect x="0" y="714" width="43" height="43" fill="#130e1c"/><rect x="42" y="714" width="43" height="43" fill="#130e1d"/><rect x="84" y="714" width="43" height="43" fill="#150f20"/><rect x="126" y="714" width="43" height="43" fill="#181126"/><rect x="168" y="714" width="43" height="43" fill="#1a122b"/><rect x="210" y="714" width="43" height="43" fill="#1b132f"/><rect x="252" y="714" width="43" height="43" fill="#1c1430"/><rect x="294" y="714" width="43" height="43" fill="#1c1431"/><rect x="336" y="714" width="43" height="43" fill="#1d1432"/><rect x="378" y="714" width="43" height="43" fill="#1d1433"/><rect x="420" y="714" width="43" height="43" fill="#1e1434"/><rect x="462" y="714" width="43" height="43" fill="#1f1433"/><rect x="504" y="714" width="43" height="43" fill="#201432"/><rect x="546" y="714" width="43" height="43" fill="#211432"/><rect x="588" y="714" width="43" height="43" fill="#211432"/><rect x="630" y="714" width="43" height="43" fill="#211433"/><rect x="672" y="714" width="43" height="43" fill="#211434"/><rect x="714" y="714" width="43" height="43" fill="#221431"/><rect x="756" y="714" width="43" height="43" fill="#23142d"/><rect x="798" y="714" width="43" height="43" fill="#23142c"/><rect x="840" y="714" width="43" height="43" fill="#24142a"/><rect x="882" y="714" width="43" height="43" fill="#24142a"/><rect x="924" y="714" width="43" height="43" fill="#241429"/><rect x="966" y="714" width="43" height="43" fill="#251428"/><rect x="1008" y="714" width="43" height="43" fill="#251525"/><rect x="1050" y="714" width="43" height="43" fill="#241422"/><rect x="1092" y="714" width="43" height="43" fill="#24141f"/><rect x="1134" y="714" width="43" height="43" fill="#23141d"/><rect x="1176" y="714" width="43" height="43" fill="#23141c"/><rect x="1218" y="714" width="43" height="43" fill="#23141c"/><rect x="1260" y="714" width="43" height="43" fill="#24141c"/><rect x="1302" y="714" width="43" height="43" fill="#25151c"/><rect x="1344" y="714" width="43" height="43" fill="#26151c"/><rect x="1386" y="714" width="43" height="43" fill="#26141b"/><rect x="1428" y="714" width="43" height="43" fill="#241419"/><rect x="1470" y="714" width="43" height="43" fill="#221318"/><rect x="1512" y="714" width="43" height="43" fill="#211217"/><rect x="1554" y="714" width="43" height="43" fill="#201216"/><rect x="1596" y="714" width="43" height="43" fill="#1f1116"/><rect x="1638" y="714" width="43" height="43" fill="#1f1116"/><rect x="1680" y="714" width="43" height="43" fill="#201116"/><rect x="1722" y="714" width="43" height="43" fill="#211217"/><rect x="-84" y="756" width="43" height="43" fill="#150f1f"/><rect x="-42" y="756" width="43" height="43" fill="#140f1e"/><rect x="0" y="756" width="43" height="43" fill="#140f1e"/><rect x="42" y="756" width="43" height="43" fill="#150f1f"/><rect x="84" y="756" width="43" height="43" fill="#161023"/><rect x="126" y="756" width="43" height="43" fill="#181127"/><rect x="168" y="756" width="43" height="43" fill="#1a122c"/><rect x="210" y="756" width="43" height="43" fill="#1b132f"/><rect x="252" y="756" width="43" height="43" fill="#1c1332"/><rect x="294" y="756" width="43" height="43" fill="#1c1334"/><rect x="336" y="756" width="43" height="43" fill="#1c1436"/><rect x="378" y="756" width="43" height="43" fill="#1c1438"/><rect x="420" y="756" width="43" height="43" fill="#1d1438"/><rect x="462" y="756" width="43" height="43" fill="#1e1436"/><rect x="504" y="756" width="43" height="43" fill="#1f1434"/><rect x="546" y="756" width="43" height="43" fill="#1f1433"/><rect x="588" y="756" width="43" height="43" fill="#1f1433"/><rect x="630" y="756" width="43" height="43" fill="#201434"/><rect x="672" y="756" width="43" height="43" fill="#201436"/><rect x="714" y="756" width="43" height="43" fill="#201435"/><rect x="756" y="756" width="43" height="43" fill="#221430"/><rect x="798" y="756" width="43" height="43" fill="#23142c"/><rect x="840" y="756" width="43" height="43" fill="#24142a"/><rect x="882" y="756" width="43" height="43" fill="#24142a"/><rect x="924" y="756" width="43" height="43" fill="#24142a"/><rect x="966" y="756" width="43" height="43" fill="#241428"/><rect x="1008" y="756" width="43" height="43" fill="#231424"/><rect x="1050" y="756" width="43" height="43" fill="#221320"/><rect x="1092" y="756" width="43" height="43" fill="#20131d"/><rect x="1134" y="756" width="43" height="43" fill="#1f121a"/><rect x="1176" y="756" width="43" height="43" fill="#1e1219"/><rect x="1218" y="756" width="43" height="43" fill="#1f1219"/><rect x="1260" y="756" width="43" height="43" fill="#20131a"/><rect x="1302" y="756" width="43" height="43" fill="#22131b"/><rect x="1344" y="756" width="43" height="43" fill="#23141b"/><rect x="1386" y="756" width="43" height="43" fill="#23131a"/><rect x="1428" y="756" width="43" height="43" fill="#211318"/><rect x="1470" y="756" width="43" height="43" fill="#1f1216"/><rect x="1512" y="756" width="43" height="43" fill="#1e1115"/><rect x="1554" y="756" width="43" height="43" fill="#1e1115"/><rect x="1596" y="756" width="43" height="43" fill="#1f1116"/><rect x="1638" y="756" width="43" height="43" fill="#1f1116"/><rect x="1680" y="756" width="43" height="43" fill="#1f1116"/><rect x="1722" y="756" width="43" height="43" fill="#201217"/><rect x="-84" y="798" width="43" height="43" fill="#161022"/><rect x="-42" y="798" width="43" height="43" fill="#160f22"/><rect x="0" y="798" width="43" height="43" fill="#160f22"/><rect x="42" y="798" width="43" height="43" fill="#161024"/><rect x="84" y="798" width="43" height="43" fill="#171026"/><rect x="126" y="798" width="43" height="43" fill="#181129"/><rect x="168" y="798" width="43" height="43" fill="#19122d"/><rect x="210" y="798" width="43" height="43" fill="#1a1231"/><rect x="252" y="798" width="43" height="43" fill="#1b1334"/><rect x="294" y="798" width="43" height="43" fill="#1b1338"/><rect x="336" y="798" width="43" height="43" fill="#1b143b"/><rect x="378" y="798" width="43" height="43" fill="#1b143d"/><rect x="420" y="798" width="43" height="43" fill="#1c143c"/><rect x="462" y="798" width="43" height="43" fill="#1d1439"/><rect x="504" y="798" width="43" height="43" fill="#1e1435"/><rect x="546" y="798" width="43" height="43" fill="#1e1433"/><rect x="588" y="798" width="43" height="43" fill="#1e1432"/><rect x="630" y="798" width="43" height="43" fill="#1e1432"/><rect x="672" y="798" width="43" height="43" fill="#201435"/><rect x="714" y="798" width="43" height="43" fill="#201434"/><rect x="756" y="798" width="43" height="43" fill="#211430"/><rect x="798" y="798" width="43" height="43" fill="#22142c"/><rect x="840" y="798" width="43" height="43" fill="#23142a"/><rect x="882" y="798" width="43" height="43" fill="#24142a"/><rect x="924" y="798" width="43" height="43" fill="#231429"/><rect x="966" y="798" width="43" height="43" fill="#221426"/><rect x="1008" y="798" width="43" height="43" fill="#211322"/><rect x="1050" y="798" width="43" height="43" fill="#20131e"/><rect x="1092" y="798" width="43" height="43" fill="#1e121b"/><rect x="1134" y="798" width="43" height="43" fill="#1d1119"/><rect x="1176" y="798" width="43" height="43" fill="#1d1118"/><rect x="1218" y="798" width="43" height="43" fill="#1d1118"/><rect x="1260" y="798" width="43" height="43" fill="#1e1219"/><rect x="1302" y="798" width="43" height="43" fill="#1f121a"/><rect x="1344" y="798" width="43" height="43" fill="#20131a"/><rect x="1386" y="798" width="43" height="43" fill="#211319"/><rect x="1428" y="798" width="43" height="43" fill="#201217"/><rect x="1470" y="798" width="43" height="43" fill="#1f1116"/><rect x="1512" y="798" width="43" height="43" fill="#1e1115"/><rect x="1554" y="798" width="43" height="43" fill="#1e1115"/><rect x="1596" y="798" width="43" height="43" fill="#1e1115"/><rect x="1638" y="798" width="43" height="43" fill="#1f1116"/><rect x="1680" y="798" width="43" height="43" fill="#1f1116"/><rect x="1722" y="798" width="43" height="43" fill="#1f1217"/><rect x="-84" y="840" width="43" height="43" fill="#161025"/><rect x="-42" y="840" width="43" height="43" fill="#161025"/><rect x="0" y="840" width="43" height="43" fill="#161025"/><rect x="42" y="840" width="43" height="43" fill="#171026"/><rect x="84" y="840" width="43" height="43" fill="#171028"/><rect x="126" y="840" width="43" height="43" fill="#18112b"/><rect x="168" y="840" width="43" height="43" fill="#19112e"/><rect x="210" y="840" width="43" height="43" fill="#1a1232"/><rect x="252" y="840" width="43" height="43" fill="#1a1236"/><rect x="294" y="840" width="43" height="43" fill="#1b133b"/><rect x="336" y="840" width="43" height="43" fill="#1b143e"/><rect x="378" y="840" width="43" height="43" fill="#1b1440"/><rect x="420" y="840" width="43" height="43" fill="#1b143f"/><rect x="462" y="840" width="43" height="43" fill="#1c133c"/><rect x="504" y="840" width="43" height="43" fill="#1c1337"/><rect x="546" y="840" width="43" height="43" fill="#1e1433"/><rect x="588" y="840" width="43" height="43" fill="#1e1432"/><rect x="630" y="840" width="43" height="43" fill="#1e1432"/><rect x="672" y="840" width="43" height="43" fill="#1e1432"/><rect x="714" y="840" width="43" height="43" fill="#1f1432"/><rect x="756" y="840" width="43" height="43" fill="#201430"/><rect x="798" y="840" width="43" height="43" fill="#21142c"/><rect x="840" y="840" width="43" height="43" fill="#21142a"/><rect x="882" y="840" width="43" height="43" fill="#211328"/><rect x="924" y="840" width="43" height="43" fill="#211326"/><rect x="966" y="840" width="43" height="43" fill="#1f1323"/><rect x="1008" y="840" width="43" height="43" fill="#1e121f"/><rect x="1050" y="840" width="43" height="43" fill="#1e121d"/><rect x="1092" y="840" width="43" height="43" fill="#1d111a"/><rect x="1134" y="840" width="43" height="43" fill="#1d1118"/><rect x="1176" y="840" width="43" height="43" fill="#1d1118"/><rect x="1218" y="840" width="43" height="43" fill="#1d1118"/><rect x="1260" y="840" width="43" height="43" fill="#1d1118"/><rect x="1302" y="840" width="43" height="43" fill="#1d1219"/><rect x="1344" y="840" width="43" height="43" fill="#1e1219"/><rect x="1386" y="840" width="43" height="43" fill="#1e1218"/><rect x="1428" y="840" width="43" height="43" fill="#1e1116"/><rect x="1470" y="840" width="43" height="43" fill="#1d1115"/><rect x="1512" y="840" width="43" height="43" fill="#1d1115"/><rect x="1554" y="840" width="43" height="43" fill="#1d1115"/><rect x="1596" y="840" width="43" height="43" fill="#1d1115"/><rect x="1638" y="840" width="43" height="43" fill="#1d1115"/><rect x="1680" y="840" width="43" height="43" fill="#1d1115"/><rect x="1722" y="840" width="43" height="43" fill="#1d1116"/><rect x="-84" y="882" width="43" height="43" fill="#161025"/><rect x="-42" y="882" width="43" height="43" fill="#161025"/><rect x="0" y="882" width="43" height="43" fill="#161025"/><rect x="42" y="882" width="43" height="43" fill="#161026"/><rect x="84" y="882" width="43" height="43" fill="#171028"/><rect x="126" y="882" width="43" height="43" fill="#18102b"/><rect x="168" y="882" width="43" height="43" fill="#18112f"/><rect x="210" y="882" width="43" height="43" fill="#191131"/><rect x="252" y="882" width="43" height="43" fill="#191134"/><rect x="294" y="882" width="43" height="43" fill="#1a133b"/><rect x="336" y="882" width="43" height="43" fill="#1b143f"/><rect x="378" y="882" width="43" height="43" fill="#1b1440"/><rect x="420" y="882" width="43" height="43" fill="#1b1440"/><rect x="462" y="882" width="43" height="43" fill="#1b133c"/><rect x="504" y="882" width="43" height="43" fill="#1b1238"/><rect x="546" y="882" width="43" height="43" fill="#1c1335"/><rect x="588" y="882" width="43" height="43" fill="#1e1333"/><rect x="630" y="882" width="43" height="43" fill="#1e1432"/><rect x="672" y="882" width="43" height="43" fill="#1e1331"/><rect x="714" y="882" width="43" height="43" fill="#1e1330"/><rect x="756" y="882" width="43" height="43" fill="#1f132e"/><rect x="798" y="882" width="43" height="43" fill="#1f132b"/><rect x="840" y="882" width="43" height="43" fill="#1e1327"/><rect x="882" y="882" width="43" height="43" fill="#1e1325"/><rect x="924" y="882" width="43" height="43" fill="#1e1223"/><rect x="966" y="882" width="43" height="43" fill="#1d1220"/><rect x="1008" y="882" width="43" height="43" fill="#1b111c"/><rect x="1050" y="882" width="43" height="43" fill="#1b111a"/><rect x="1092" y="882" width="43" height="43" fill="#1c111a"/><rect x="1134" y="882" width="43" height="43" fill="#1c1118"/><rect x="1176" y="882" width="43" height="43" fill="#1c1118"/><rect x="1218" y="882" width="43" height="43" fill="#1c1118"/><rect x="1260" y="882" width="43" height="43" fill="#1b1117"/><rect x="1302" y="882" width="43" height="43" fill="#1b1117"/><rect x="1344" y="882" width="43" height="43" fill="#1c1118"/><rect x="1386" y="882" width="43" height="43" fill="#1c1117"/><rect x="1428" y="882" width="43" height="43" fill="#1b1015"/><rect x="1470" y="882" width="43" height="43" fill="#1a1014"/><rect x="1512" y="882" width="43" height="43" fill="#190f13"/><rect x="1554" y="882" width="43" height="43" fill="#180f13"/><rect x="1596" y="882" width="43" height="43" fill="#180f13"/><rect x="1638" y="882" width="43" height="43" fill="#170f12"/><rect x="1680" y="882" width="43" height="43" fill="#180f13"/><rect x="1722" y="882" width="43" height="43" fill="#191014"/><rect x="-84" y="924" width="43" height="43" fill="#161025"/><rect x="-42" y="924" width="43" height="43" fill="#161024"/><rect x="0" y="924" width="43" height="43" fill="#161024"/><rect x="42" y="924" width="43" height="43" fill="#171027"/><rect x="84" y="924" width="43" height="43" fill="#171029"/><rect x="126" y="924" width="43" height="43" fill="#18102c"/><rect x="168" y="924" width="43" height="43" fill="#18102f"/><rect x="210" y="924" width="43" height="43" fill="#181030"/><rect x="252" y="924" width="43" height="43" fill="#181031"/><rect x="294" y="924" width="43" height="43" fill="#1a1238"/><rect x="336" y="924" width="43" height="43" fill="#1b1441"/><rect x="378" y="924" width="43" height="43" fill="#1b1442"/><rect x="420" y="924" width="43" height="43" fill="#1b1441"/><rect x="462" y="924" width="43" height="43" fill="#1a123a"/><rect x="504" y="924" width="43" height="43" fill="#191137"/><rect x="546" y="924" width="43" height="43" fill="#1a1136"/><rect x="588" y="924" width="43" height="43" fill="#1c1233"/><rect x="630" y="924" width="43" height="43" fill="#1d1331"/><rect x="672" y="924" width="43" height="43" fill="#1c1230"/><rect x="714" y="924" width="43" height="43" fill="#1d1230"/><rect x="756" y="924" width="43" height="43" fill="#1d132e"/><rect x="798" y="924" width="43" height="43" fill="#1d1229"/><rect x="840" y="924" width="43" height="43" fill="#1d1225"/><rect x="882" y="924" width="43" height="43" fill="#1c1224"/><rect x="924" y="924" width="43" height="43" fill="#1c1223"/><rect x="966" y="924" width="43" height="43" fill="#1b111d"/><rect x="1008" y="924" width="43" height="43" fill="#1a1019"/><rect x="1050" y="924" width="43" height="43" fill="#191019"/><rect x="1092" y="924" width="43" height="43" fill="#1a1119"/><rect x="1134" y="924" width="43" height="43" fill="#1b1118"/><rect x="1176" y="924" width="43" height="43" fill="#191017"/><rect x="1218" y="924" width="43" height="43" fill="#181016"/><rect x="1260" y="924" width="43" height="43" fill="#181016"/><rect x="1302" y="924" width="43" height="43" fill="#191016"/><rect x="1344" y="924" width="43" height="43" fill="#1a1117"/><rect x="1386" y="924" width="43" height="43" fill="#1a1016"/><rect x="1428" y="924" width="43" height="43" fill="#190f14"/><rect x="1470" y="924" width="43" height="43" fill="#160e12"/><rect x="1512" y="924" width="43" height="43" fill="#140e11"/><rect x="1554" y="924" width="43" height="43" fill="#140d11"/><rect x="1596" y="924" width="43" height="43" fill="#140d11"/><rect x="1638" y="924" width="43" height="43" fill="#130d10"/><rect x="1680" y="924" width="43" height="43" fill="#140e11"/><rect x="1722" y="924" width="43" height="43" fill="#160e12"/><rect x="-84" y="966" width="43" height="43" fill="#161026"/><rect x="-42" y="966" width="43" height="43" fill="#161025"/><rect x="0" y="966" width="43" height="43" fill="#161027"/><rect x="42" y="966" width="43" height="43" fill="#17102a"/><rect x="84" y="966" width="43" height="43" fill="#17102a"/><rect x="126" y="966" width="43" height="43" fill="#18102c"/><rect x="168" y="966" width="43" height="43" fill="#181030"/><rect x="210" y="966" width="43" height="43" fill="#181030"/><rect x="252" y="966" width="43" height="43" fill="#181030"/><rect x="294" y="966" width="43" height="43" fill="#191136"/><rect x="336" y="966" width="43" height="43" fill="#1c1443"/><rect x="378" y="966" width="43" height="43" fill="#1c1446"/><rect x="420" y="966" width="43" height="43" fill="#1c1444"/><rect x="462" y="966" width="43" height="43" fill="#191138"/><rect x="504" y="966" width="43" height="43" fill="#181036"/><rect x="546" y="966" width="43" height="43" fill="#191036"/><rect x="588" y="966" width="43" height="43" fill="#1b1233"/><rect x="630" y="966" width="43" height="43" fill="#1c1230"/><rect x="672" y="966" width="43" height="43" fill="#1c1230"/><rect x="714" y="966" width="43" height="43" fill="#1c1230"/><rect x="756" y="966" width="43" height="43" fill="#1d122e"/><rect x="798" y="966" width="43" height="43" fill="#1d1228"/><rect x="840" y="966" width="43" height="43" fill="#1c1224"/><rect x="882" y="966" width="43" height="43" fill="#1c1224"/><rect x="924" y="966" width="43" height="43" fill="#1c1223"/><rect x="966" y="966" width="43" height="43" fill="#1a111c"/><rect x="1008" y="966" width="43" height="43" fill="#191018"/><rect x="1050" y="966" width="43" height="43" fill="#191018"/><rect x="1092" y="966" width="43" height="43" fill="#1a1019"/><rect x="1134" y="966" width="43" height="43" fill="#191118"/><rect x="1176" y="966" width="43" height="43" fill="#181016"/><rect x="1218" y="966" width="43" height="43" fill="#171015"/><rect x="1260" y="966" width="43" height="43" fill="#171015"/><rect x="1302" y="966" width="43" height="43" fill="#181016"/><rect x="1344" y="966" width="43" height="43" fill="#191016"/><rect x="1386" y="966" width="43" height="43" fill="#191015"/><rect x="1428" y="966" width="43" height="43" fill="#170f13"/><rect x="1470" y="966" width="43" height="43" fill="#140e11"/><rect x="1512" y="966" width="43" height="43" fill="#130d10"/><rect x="1554" y="966" width="43" height="43" fill="#130d10"/><rect x="1596" y="966" width="43" height="43" fill="#130d10"/><rect x="1638" y="966" width="43" height="43" fill="#120d10"/><rect x="1680" y="966" width="43" height="43" fill="#120d10"/><rect x="1722" y="966" width="43" height="43" fill="#140e11"/><rect x="-84" y="1008" width="43" height="43" fill="#171027"/><rect x="-42" y="1008" width="43" height="43" fill="#171027"/><rect x="0" y="1008" width="43" height="43" fill="#171029"/><rect x="42" y="1008" width="43" height="43" fill="#17102a"/><rect x="84" y="1008" width="43" height="43" fill="#17102a"/><rect x="126" y="1008" width="43" height="43" fill="#18102c"/><rect x="168" y="1008" width="43" height="43" fill="#18102f"/><rect x="210" y="1008" width="43" height="43" fill="#181030"/><rect x="252" y="1008" width="43" height="43" fill="#181031"/><rect x="294" y="1008" width="43" height="43" fill="#191137"/><rect x="336" y="1008" width="43" height="43" fill="#1b1342"/><rect x="378" y="1008" width="43" height="43" fill="#1c1445"/><rect x="420" y="1008" width="43" height="43" fill="#1b1342"/><rect x="462" y="1008" width="43" height="43" fill="#191139"/><rect x="504" y="1008" width="43" height="43" fill="#181036"/><rect x="546" y="1008" width="43" height="43" fill="#191136"/><rect x="588" y="1008" width="43" height="43" fill="#1b1233"/><rect x="630" y="1008" width="43" height="43" fill="#1c1231"/><rect x="672" y="1008" width="43" height="43" fill="#1c1230"/><rect x="714" y="1008" width="43" height="43" fill="#1c1230"/><rect x="756" y="1008" width="43" height="43" fill="#1d122d"/><rect x="798" y="1008" width="43" height="43" fill="#1d1228"/><rect x="840" y="1008" width="43" height="43" fill="#1c1224"/><rect x="882" y="1008" width="43" height="43" fill="#1c1224"/><rect x="924" y="1008" width="43" height="43" fill="#1c1223"/><rect x="966" y="1008" width="43" height="43" fill="#1a111d"/><rect x="1008" y="1008" width="43" height="43" fill="#191019"/><rect x="1050" y="1008" width="43" height="43" fill="#191018"/><rect x="1092" y="1008" width="43" height="43" fill="#1a1019"/><rect x="1134" y="1008" width="43" height="43" fill="#191018"/><rect x="1176" y="1008" width="43" height="43" fill="#181016"/><rect x="1218" y="1008" width="43" height="43" fill="#171015"/><rect x="1260" y="1008" width="43" height="43" fill="#171015"/><rect x="1302" y="1008" width="43" height="43" fill="#181016"/><rect x="1344" y="1008" width="43" height="43" fill="#191016"/><rect x="1386" y="1008" width="43" height="43" fill="#191015"/><rect x="1428" y="1008" width="43" height="43" fill="#160f13"/><rect x="1470" y="1008" width="43" height="43" fill="#140e11"/><rect x="1512" y="1008" width="43" height="43" fill="#130d10"/><rect x="1554" y="1008" width="43" height="43" fill="#130d10"/><rect x="1596" y="1008" width="43" height="43" fill="#130d10"/><rect x="1638" y="1008" width="43" height="43" fill="#120d10"/><rect x="1680" y="1008" width="43" height="43" fill="#120d10"/><rect x="1722" y="1008" width="43" height="43" fill="#140e11"/><rect x="-84" y="1050" width="43" height="43" fill="#171028"/><rect x="-42" y="1050" width="43" height="43" fill="#171028"/><rect x="0" y="1050" width="43" height="43" fill="#171029"/><rect x="42" y="1050" width="43" height="43" fill="#171029"/><rect x="84" y="1050" width="43" height="43" fill="#17102a"/><rect x="126" y="1050" width="43" height="43" fill="#18102d"/><rect x="168" y="1050" width="43" height="43" fill="#18102f"/><rect x="210" y="1050" width="43" height="43" fill="#181031"/><rect x="252" y="1050" width="43" height="43" fill="#191133"/><rect x="294" y="1050" width="43" height="43" fill="#1a1238"/><rect x="336" y="1050" width="43" height="43" fill="#1b133e"/><rect x="378" y="1050" width="43" height="43" fill="#1b1341"/><rect x="420" y="1050" width="43" height="43" fill="#1b133f"/><rect x="462" y="1050" width="43" height="43" fill="#1a123a"/><rect x="504" y="1050" width="43" height="43" fill="#191137"/><rect x="546" y="1050" width="43" height="43" fill="#1a1136"/><rect x="588" y="1050" width="43" height="43" fill="#1b1233"/><rect x="630" y="1050" width="43" height="43" fill="#1c1231"/><rect x="672" y="1050" width="43" height="43" fill="#1c1230"/><rect x="714" y="1050" width="43" height="43" fill="#1c122f"/><rect x="756" y="1050" width="43" height="43" fill="#1d122d"/><rect x="798" y="1050" width="43" height="43" fill="#1d1228"/><rect x="840" y="1050" width="43" height="43" fill="#1c1225"/><rect x="882" y="1050" width="43" height="43" fill="#1c1224"/><rect x="924" y="1050" width="43" height="43" fill="#1c1222"/><rect x="966" y="1050" width="43" height="43" fill="#1b111e"/><rect x="1008" y="1050" width="43" height="43" fill="#1a111b"/><rect x="1050" y="1050" width="43" height="43" fill="#1a101a"/><rect x="1092" y="1050" width="43" height="43" fill="#1a1119"/><rect x="1134" y="1050" width="43" height="43" fill="#1a1119"/><rect x="1176" y="1050" width="43" height="43" fill="#191017"/><rect x="1218" y="1050" width="43" height="43" fill="#181016"/><rect x="1260" y="1050" width="43" height="43" fill="#181016"/><rect x="1302" y="1050" width="43" height="43" fill="#191016"/><rect x="1344" y="1050" width="43" height="43" fill="#191016"/><rect x="1386" y="1050" width="43" height="43" fill="#191015"/><rect x="1428" y="1050" width="43" height="43" fill="#170f13"/><rect x="1470" y="1050" width="43" height="43" fill="#150e12"/><rect x="1512" y="1050" width="43" height="43" fill="#140d11"/><rect x="1554" y="1050" width="43" height="43" fill="#130d10"/><rect x="1596" y="1050" width="43" height="43" fill="#130d10"/><rect x="1638" y="1050" width="43" height="43" fill="#130d10"/><rect x="1680" y="1050" width="43" height="43" fill="#130d11"/><rect x="1722" y="1050" width="43" height="43" fill="#140e11"/><rect x="-84" y="1092" width="43" height="43" fill="#181028"/><rect x="-42" y="1092" width="43" height="43" fill="#171029"/><rect x="0" y="1092" width="43" height="43" fill="#171029"/><rect x="42" y="1092" width="43" height="43" fill="#17102a"/><rect x="84" y="1092" width="43" height="43" fill="#18102b"/><rect x="126" y="1092" width="43" height="43" fill="#18112d"/><rect x="168" y="1092" width="43" height="43" fill="#191130"/><rect x="210" y="1092" width="43" height="43" fill="#191132"/><rect x="252" y="1092" width="43" height="43" fill="#191134"/><rect x="294" y="1092" width="43" height="43" fill="#1a1237"/><rect x="336" y="1092" width="43" height="43" fill="#1b133b"/><rect x="378" y="1092" width="43" height="43" fill="#1b133d"/><rect x="420" y="1092" width="43" height="43" fill="#1b133c"/><rect x="462" y="1092" width="43" height="43" fill="#1b1239"/><rect x="504" y="1092" width="43" height="43" fill="#1a1237"/><rect x="546" y="1092" width="43" height="43" fill="#1b1235"/><rect x="588" y="1092" width="43" height="43" fill="#1c1233"/><rect x="630" y="1092" width="43" height="43" fill="#1c1231"/><rect x="672" y="1092" width="43" height="43" fill="#1d1230"/><rect x="714" y="1092" width="43" height="43" fill="#1d122e"/><rect x="756" y="1092" width="43" height="43" fill="#1d122c"/><rect x="798" y="1092" width="43" height="43" fill="#1d1229"/><rect x="840" y="1092" width="43" height="43" fill="#1d1226"/><rect x="882" y="1092" width="43" height="43" fill="#1d1224"/><rect x="924" y="1092" width="43" height="43" fill="#1c1222"/><rect x="966" y="1092" width="43" height="43" fill="#1c111f"/><rect x="1008" y="1092" width="43" height="43" fill="#1b111d"/><rect x="1050" y="1092" width="43" height="43" fill="#1b111b"/><rect x="1092" y="1092" width="43" height="43" fill="#1b111b"/><rect x="1134" y="1092" width="43" height="43" fill="#1a111a"/><rect x="1176" y="1092" width="43" height="43" fill="#1a1118"/><rect x="1218" y="1092" width="43" height="43" fill="#191117"/><rect x="1260" y="1092" width="43" height="43" fill="#191117"/><rect x="1302" y="1092" width="43" height="43" fill="#1a1117"/><rect x="1344" y="1092" width="43" height="43" fill="#1a1117"/><rect x="1386" y="1092" width="43" height="43" fill="#191016"/><rect x="1428" y="1092" width="43" height="43" fill="#180f14"/><rect x="1470" y="1092" width="43" height="43" fill="#160e13"/><rect x="1512" y="1092" width="43" height="43" fill="#150e12"/><rect x="1554" y="1092" width="43" height="43" fill="#140e11"/><rect x="1596" y="1092" width="43" height="43" fill="#140e11"/><rect x="1638" y="1092" width="43" height="43" fill="#140e11"/><rect x="1680" y="1092" width="43" height="43" fill="#140e12"/><rect x="1722" y="1092" width="43" height="43" fill="#160e12"/><rect x="-84" y="1134" width="43" height="43" fill="#181129"/><rect x="-42" y="1134" width="43" height="43" fill="#181129"/><rect x="0" y="1134" width="43" height="43" fill="#18112a"/><rect x="42" y="1134" width="43" height="43" fill="#18112b"/><rect x="84" y="1134" width="43" height="43" fill="#18112c"/><rect x="126" y="1134" width="43" height="43" fill="#19112e"/><rect x="168" y="1134" width="43" height="43" fill="#191130"/><rect x="210" y="1134" width="43" height="43" fill="#191132"/><rect x="252" y="1134" width="43" height="43" fill="#1a1234"/><rect x="294" y="1134" width="43" height="43" fill="#1a1236"/><rect x="336" y="1134" width="43" height="43" fill="#1b1239"/><rect x="378" y="1134" width="43" height="43" fill="#1b133a"/><rect x="420" y="1134" width="43" height="43" fill="#1b1239"/><rect x="462" y="1134" width="43" height="43" fill="#1b1238"/><rect x="504" y="1134" width="43" height="43" fill="#1b1236"/><rect x="546" y="1134" width="43" height="43" fill="#1c1235"/><rect x="588" y="1134" width="43" height="43" fill="#1c1233"/><rect x="630" y="1134" width="43" height="43" fill="#1c1231"/><rect x="672" y="1134" width="43" height="43" fill="#1d1230"/><rect x="714" y="1134" width="43" height="43" fill="#1d132e"/><rect x="756" y="1134" width="43" height="43" fill="#1d132c"/><rect x="798" y="1134" width="43" height="43" fill="#1d1329"/><rect x="840" y="1134" width="43" height="43" fill="#1d1227"/><rect x="882" y="1134" width="43" height="43" fill="#1d1225"/><rect x="924" y="1134" width="43" height="43" fill="#1d1223"/><rect x="966" y="1134" width="43" height="43" fill="#1c1220"/><rect x="1008" y="1134" width="43" height="43" fill="#1c121f"/><rect x="1050" y="1134" width="43" height="43" fill="#1c111d"/><rect x="1092" y="1134" width="43" height="43" fill="#1c111c"/><rect x="1134" y="1134" width="43" height="43" fill="#1b111b"/><rect x="1176" y="1134" width="43" height="43" fill="#1b111a"/><rect x="1218" y="1134" width="43" height="43" fill="#1b1119"/><rect x="1260" y="1134" width="43" height="43" fill="#1b1119"/><rect x="1302" y="1134" width="43" height="43" fill="#1b1118"/><rect x="1344" y="1134" width="43" height="43" fill="#1b1118"/><rect x="1386" y="1134" width="43" height="43" fill="#1a1017"/><rect x="1428" y="1134" width="43" height="43" fill="#191015"/><rect x="1470" y="1134" width="43" height="43" fill="#170f14"/><rect x="1512" y="1134" width="43" height="43" fill="#160f13"/><rect x="1554" y="1134" width="43" height="43" fill="#160e12"/><rect x="1596" y="1134" width="43" height="43" fill="#160e12"/><rect x="1638" y="1134" width="43" height="43" fill="#160e12"/><rect x="1680" y="1134" width="43" height="43" fill="#160f13"/><rect x="1722" y="1134" width="43" height="43" fill="#170f13"/></g><path d="M1290 27 L1500 27 L1676 120 L1676 27 Z" fill="#a05068" opacity=".10"/><path d="M330 27 L370 27 L300 360 L290 360 Z" fill="#4040a0" opacity=".10"/><rect x="352" y="700" width="106" height="350" fill="#3030a0" opacity=".10"/></svg>
<div id="top">
<span style="position:absolute;white-space:pre;left:8.8px;top:4.6px;font-size:14px;line-height:18px;letter-spacing:-0.45px;font-weight:bold;color:#dcdcdc;">Podgląd</span>
<span style="position:absolute;white-space:pre;left:89.3px;top:4.6px;font-size:14px;line-height:18px;letter-spacing:-0.25px;font-weight:bold;color:#dcdcdc;">Programy</span>
<i class="tri" style="left:159.5px;top:11px"></i>
<span style="position:absolute;white-space:pre;left:200.3px;top:4.6px;font-size:14px;line-height:18px;letter-spacing:-0.11px;font-weight:bold;color:#dcdcdc;">Miejsca</span>
<i class="tri" style="left:256.5px;top:11px"></i>
<div style="position:absolute;left:301px;top:5px;width:16px;height:16px;background:linear-gradient(160deg,#2b2b2b 0,#555 45%,#aaa 100%);overflow:hidden"><span style="position:absolute;left:1px;top:4px;font-size:7px;line-height:7px;color:#eee;font-weight:bold;letter-spacing:-.3px">MMS</span></div>
<span style="position:absolute;white-space:pre;left:324.1px;top:4.6px;font-size:14px;line-height:18px;letter-spacing:0.45px;font-weight:bold;color:#dcdcdc;">XMMS</span>
<i class="tri" style="left:373.5px;top:11px"></i>
<span style="position:absolute;white-space:pre;left:783.2px;top:4.6px;font-size:14px;line-height:18px;letter-spacing:-0.10px;font-weight:bold;color:#dcdcdc;">wto 7 sty</span>
<span style="position:absolute;white-space:pre;left:850.7px;top:4.6px;font-size:14px;line-height:18px;letter-spacing:0.95px;font-weight:bold;color:#dcdcdc;">00:01</span>
<svg style="position:absolute;left:1454px;top:5px" width="17" height="17" viewBox="0 0 16 16"><circle cx="8" cy="8" r="7.6" fill="#dedede"/><circle cx="8" cy="3.6" r="1.5" fill="#000"/><path d="M3.2 5.6 L6.6 6.2 L9.4 6.2 L12.8 5.6 L12.9 6.7 L9.6 7.5 L9.6 9.4 L10.6 13.3 L9.5 13.6 L8 10.2 L6.5 13.6 L5.4 13.3 L6.4 9.4 L6.4 7.5 L3.1 6.7 Z" fill="#000"/></svg>
<i class="tri" style="left:1480.5px;top:11px"></i>
<svg style="position:absolute;left:1521px;top:5px" width="16" height="16" viewBox="0 0 16 16"><path d="M8.2 1 A7.2 7.2 0 1 0 14.2 12 A5.6 5.6 0 0 1 8.2 1 Z" fill="#d8d8d8"/></svg>
<svg style="position:absolute;left:1549px;top:5px" width="17" height="17" viewBox="0 0 17 17"><rect x="6" y="1" width="5" height="5" fill="#dcdcdc"/><rect x="1" y="11" width="5" height="5" fill="#dcdcdc"/><rect x="11" y="11" width="5" height="5" fill="#dcdcdc"/><path d="M8.5 6 V8.5 M3.5 11 V8.5 H13.5 V11" stroke="#dcdcdc" stroke-width="1.3" fill="none"/></svg>
<svg style="position:absolute;left:1577px;top:5px" width="17" height="16" viewBox="0 0 17 16"><path d="M1 5.5 H3.6 L7.4 1.6 V14.4 L3.6 10.5 H1 Z" fill="#dcdcdc"/><path d="M9.2 5.2 A4 4 0 0 1 9.2 10.8" stroke="#dcdcdc" stroke-width="1.5" fill="none"/><path d="M11.2 3 A7 7 0 0 1 11.2 13" stroke="#bdbdbd" stroke-width="1.5" fill="none"/><path d="M13.4 1.4 A9.4 9.4 0 0 1 13.4 14.6" stroke="#6a6a6a" stroke-width="1.4" fill="none"/></svg>
<svg style="position:absolute;left:1607px;top:4px" width="16" height="18" viewBox="0 0 16 18"><path d="M4 1.2 H9 V3 H11.2 V9 M1.8 3 H4 M1.8 3 V15.6 H7.5" stroke="#dcdcdc" stroke-width="2" fill="none"/><path d="M11.8 7.4 L7.2 13 H10 L8.8 17.4 L14 11.2 H11.2 Z" fill="#dcdcdc"/></svg>
<span style="position:absolute;white-space:pre;left:1627.7px;top:5.6px;font-size:12px;line-height:16px;letter-spacing:-0.30px;font-weight:bold;color:#dcdcdc;">0%</span>
<i class="tri" style="left:1651.5px;top:11px"></i>
</div>
<div id="xmms" style="position:absolute;left:0;top:0">
<div style="position:absolute;left:45px;top:72px;width:574px;height:230px;background:#1d1d1f;box-shadow:0 2px 8px rgba(0,0,0,.6)"></div>
<div style="position:absolute;left:45px;top:72px;width:274px;height:115px;background:linear-gradient(180deg,#3a3a3c 0,#2c2c2e 12%,#262628 60%,#1c1c1e 100%);border:1px solid #0c0c0c;border-top-color:#4a4a4c"></div>
<div style="position:absolute;left:62px;top:72px;width:87.5px;height:67.5px;background:linear-gradient(100deg,#060608 0,#0a0a0c 45%,#222224 80%,#343436 100%);border-radius:0 0 9px 9px;border:1px solid #4c4c4e;border-top:none;border-left-color:#8a8a86;overflow:hidden"><div style="position:absolute;left:0;top:0;width:88px;height:16px;background:linear-gradient(180deg,#2a2a2c,rgba(20,20,22,0))"></div><div style="position:absolute;left:-12px;top:3px;width:44px;height:12px;transform:rotate(-17deg);background:radial-gradient(ellipse at 32% 50%,#fffbe6 0,#d8d2b8 20%,rgba(120,118,104,.45) 45%,rgba(40,40,40,0) 72%)"></div><div style="position:absolute;left:40px;top:-2px;width:50px;height:3px;transform:rotate(-19deg);transform-origin:0 0;background:linear-gradient(90deg,rgba(120,120,120,0),rgba(130,130,128,.5),rgba(120,120,120,0))"></div></div>
<div style="position:absolute;left:63.6px;top:93.2px;width:82px;height:38.8px;background:linear-gradient(180deg,#0c1628 0,#0a101e 12%,#090d18 100%);border-radius:4px"></div>
<div style="position:absolute;left:72px;top:101px;width:5.3px;height:5.2px;background:#3f98f2"></div>
<span style="position:absolute;white-space:pre;left:91.1px;top:90.9px;font-size:19.5px;line-height:25px;letter-spacing:0.35px;font-weight:bold;color:#111824;font-family:'Liberation Mono',monospace;">88</span>
<span style="position:absolute;white-space:pre;left:121.1px;top:90.9px;font-size:19.5px;line-height:25px;letter-spacing:0.35px;font-weight:bold;color:#111824;font-family:'Liberation Mono',monospace;">88</span>
<div style="position:absolute;left:115.8px;top:101px;width:3.4px;height:2px;background:#3d8eea"></div>
<div style="position:absolute;left:115.8px;top:105.2px;width:3.4px;height:2px;background:#3d8eea"></div>
<div style="position:absolute;left:67px;top:114px;width:77.3px;height:17.3px;background-color:#091020;background-image:radial-gradient(circle,rgba(40,90,170,.28) 0.5px,transparent 0.8px);background-size:2px 2px;border-left:1px dotted #9cc4f4;border-bottom:1px dotted #6aa8f0"></div>
<span style="position:absolute;white-space:pre;left:67.6px;top:131.3px;font-size:5px;line-height:6px;letter-spacing:-0.26px;font-weight:bold;color:#b4b4b4;">VIZ DISPLAY</span>
<div style="position:absolute;left:46px;top:73px;width:16px;height:67px;background:linear-gradient(90deg,#1a1a1c,#2e2e30 60%,#1c1c1e)"></div>
<div style="position:absolute;left:55.3px;top:93px;width:5.7px;height:43.2px;background:#0c1018;border:1px solid #2a62ad;border-right:none;border-top-color:#111"></div>
<span style="position:absolute;white-space:pre;left:56.7px;top:95.7px;font-size:7px;line-height:9px;font-weight:bold;color:#4a9cf0;font-family:'Liberation Mono',monospace;">O</span>
<span style="position:absolute;white-space:pre;left:56.7px;top:103.7px;font-size:7px;line-height:9px;font-weight:bold;color:#4a9cf0;font-family:'Liberation Mono',monospace;">A</span>
<span style="position:absolute;white-space:pre;left:56.7px;top:111.7px;font-size:7px;line-height:9px;font-weight:bold;color:#4a9cf0;font-family:'Liberation Mono',monospace;">I</span>
<span style="position:absolute;white-space:pre;left:56.7px;top:119.7px;font-size:7px;line-height:9px;font-weight:bold;color:#4a9cf0;font-family:'Liberation Mono',monospace;">D</span>
<span style="position:absolute;white-space:pre;left:56.7px;top:127.7px;font-size:7px;line-height:9px;font-weight:bold;color:#4a9cf0;font-family:'Liberation Mono',monospace;">V</span>
<span style="position:absolute;white-space:pre;left:187.4px;top:82.2px;font-size:9.5px;line-height:12px;letter-spacing:-0.69px;color:#ececec;">X MULTIMEDIA SYSTEM</span>
<span style="position:absolute;white-space:pre;left:50.0px;top:73.4px;font-size:9px;line-height:12px;color:#8a8a8a;">✥</span>
<span style="position:absolute;white-space:pre;left:287.8px;top:74.2px;font-size:8px;line-height:10px;letter-spacing:4.20px;color:#4e4e50;">▾▴✕</span>
<div style="position:absolute;left:152px;top:93px;width:161px;height:33px;background:#090d18;border-radius:5px;box-shadow:inset 0 0 0 1px #15181f,0 1px 0 #4a4a4c"></div>
<span style="position:absolute;white-space:pre;left:156.0px;top:95.2px;font-size:9px;line-height:12px;letter-spacing:-0.41px;color:#4a98f0;font-family:'Liberation Mono',monospace;">XMMS 1.2.11</span>
<span style="position:absolute;white-space:pre;left:172.7px;top:112.5px;font-size:8px;line-height:10px;letter-spacing:-0.79px;color:#4a98f0;font-family:'Liberation Mono',monospace;">kbps</span>
<span style="position:absolute;white-space:pre;left:212.5px;top:112.5px;font-size:8px;line-height:10px;letter-spacing:-0.78px;color:#4a98f0;font-family:'Liberation Mono',monospace;">kHz</span>
<div style="position:absolute;left:261px;top:114px;width:21px;height:8px;background:#05070c"></div>
<div style="position:absolute;left:284px;top:114px;width:27px;height:8px;background:#05070c"></div>
<span style="position:absolute;white-space:pre;left:262.7px;top:114.4px;font-size:6px;line-height:8px;letter-spacing:-0.42px;font-weight:bold;color:#151b26;">MONO</span>
<span style="position:absolute;white-space:pre;left:286.0px;top:114.4px;font-size:6px;line-height:8px;letter-spacing:-0.20px;font-weight:bold;color:#151b26;">STEREO</span>
<div style="position:absolute;left:154px;top:134px;width:61px;height:1.5px;background:linear-gradient(90deg,#555,#999)"></div>
<div style="position:absolute;left:201px;top:131.5px;width:14px;height:6.5px;background:linear-gradient(180deg,#9fb4c4,#3f5261);border-radius:2px;border:1px solid #222"></div>
<div style="position:absolute;left:221px;top:134px;width:38px;height:1.5px;background:#8a8a8a"></div>
<div style="position:absolute;left:233px;top:131.5px;width:14px;height:6.5px;background:linear-gradient(180deg,#9fb4c4,#3f5261);border-radius:2px;border:1px solid #222"></div>
<div style="position:absolute;left:264px;top:130px;width:9.4px;height:9.4px;border-radius:50%;background:#3090f8;box-shadow:0 0 0 1.2px #122c58,0.5px 1.5px 1px #8a9ab0"></div>
<span style="position:absolute;white-space:pre;left:276.0px;top:131.6px;font-size:5.5px;line-height:7px;font-weight:bold;color:#e0e0e0;">EQ</span>
<div style="position:absolute;left:287.3px;top:130px;width:9.4px;height:9.4px;border-radius:50%;background:#3090f8;box-shadow:0 0 0 1.2px #122c58,0.5px 1.5px 1px #8a9ab0"></div>
<span style="position:absolute;white-space:pre;left:299.5px;top:131.6px;font-size:5.5px;line-height:7px;font-weight:bold;color:#e0e0e0;">PL</span>
<div style="position:absolute;left:59px;top:146.5px;width:250px;height:1.5px;background:linear-gradient(90deg,#555,#d0d0d0 50%,#555)"></div>
<div style="position:absolute;left:59px;top:148px;width:250px;height:1px;background:#0a0a0a"></div>
<div style="position:absolute;left:52px;top:155px;width:260px;height:26px;background:linear-gradient(180deg,#151517,#2a2a2c);border-radius:4px;box-shadow:inset 0 1px 2px #000,0 1px 0 #3c3c3e"></div>
<div style="position:absolute;left:59.6px;top:160px;width:22.6px;height:2.5px;background:#1a1a1c;border-top:1px solid #3a3a3c"></div>
<div style="position:absolute;left:59.6px;top:162.5px;width:22.6px;height:13px;background:linear-gradient(180deg,#5e6166 0,#484a4e 35%,#2c2d30 100%);border:1px solid #101010;border-top-color:#7a7c80"></div>
<div style="position:absolute;left:82.6px;top:160px;width:22.6px;height:2.5px;background:#1a1a1c;border-top:1px solid #3a3a3c"></div>
<div style="position:absolute;left:82.6px;top:162.5px;width:22.6px;height:13px;background:linear-gradient(180deg,#5e6166 0,#484a4e 35%,#2c2d30 100%);border:1px solid #101010;border-top-color:#7a7c80"></div>
<div style="position:absolute;left:105.6px;top:160px;width:22.6px;height:2.5px;background:#1a1a1c;border-top:1px solid #3a3a3c"></div>
<div style="position:absolute;left:105.6px;top:162.5px;width:22.6px;height:13px;background:linear-gradient(180deg,#5e6166 0,#484a4e 35%,#2c2d30 100%);border:1px solid #101010;border-top-color:#7a7c80"></div>
<div style="position:absolute;left:128.6px;top:160px;width:22.6px;height:2.5px;background:#1a1a1c;border-top:1px solid #3a3a3c"></div>
<div style="position:absolute;left:128.6px;top:162.5px;width:22.6px;height:13px;background:linear-gradient(180deg,#5e6166 0,#484a4e 35%,#2c2d30 100%);border:1px solid #101010;border-top-color:#7a7c80"></div>
<div style="position:absolute;left:151.6px;top:160px;width:22.6px;height:2.5px;background:#1a1a1c;border-top:1px solid #3a3a3c"></div>
<div style="position:absolute;left:151.6px;top:162.5px;width:22.6px;height:13px;background:linear-gradient(180deg,#5e6166 0,#484a4e 35%,#2c2d30 100%);border:1px solid #101010;border-top-color:#7a7c80"></div>
<div style="position:absolute;left:66.5px;top:167.6px;width:1.5px;height:5.2px;background:#2c82e4"></div>
<div style="position:absolute;left:68px;top:167.6px;width:0;height:0;border-top:2.6px solid transparent;border-bottom:2.6px solid transparent;border-right:5px solid #2c82e4"></div>
<div style="position:absolute;left:91.5px;top:167.6px;width:0;height:0;border-top:2.6px solid transparent;border-bottom:2.6px solid transparent;border-left:5.5px solid #2c82e4"></div>
<div style="position:absolute;left:114.5px;top:167.6px;width:1.7px;height:5.2px;background:#2c82e4"></div>
<div style="position:absolute;left:118px;top:167.6px;width:1.7px;height:5.2px;background:#2c82e4"></div>
<div style="position:absolute;left:137.2px;top:167.6px;width:5.4px;height:5.2px;background:#2c82e4"></div>
<div style="position:absolute;left:158.5px;top:167.6px;width:0;height:0;border-top:2.6px solid transparent;border-bottom:2.6px solid transparent;border-left:5px solid #2c82e4"></div>
<div style="position:absolute;left:164px;top:167.6px;width:1.5px;height:5.2px;background:#2c82e4"></div>
<div style="position:absolute;left:179.7px;top:160px;width:22.8px;height:2.5px;background:#1a1a1c;border-top:1px solid #3a3a3c"></div>
<div style="position:absolute;left:179.7px;top:162.5px;width:22.8px;height:13px;background:linear-gradient(180deg,#5e6166 0,#484a4e 35%,#2c2d30 100%);border:1px solid #101010;border-top-color:#7a7c80"></div>
<div style="position:absolute;left:186.5px;top:166.5px;width:0;height:0;border-left:4.5px solid transparent;border-right:4.5px solid transparent;border-bottom:3.5px solid #2c82e4"></div>
<div style="position:absolute;left:186.5px;top:171px;width:9px;height:1.4px;background:#2c82e4"></div>
<div style="position:absolute;left:226.6px;top:161.5px;width:27.4px;height:13px;background:linear-gradient(180deg,#4a4a4c,#262628);border:1px solid #0e0e0e;border-top-color:#6e6e70"></div>
<div style="position:absolute;left:254px;top:161.5px;width:27.6px;height:13px;background:linear-gradient(180deg,#4a4a4c,#262628);border:1px solid #0e0e0e;border-top-color:#6e6e70"></div>
<span style="position:absolute;white-space:pre;left:228.7px;top:164.6px;font-size:7px;line-height:9px;letter-spacing:-0.74px;font-weight:bold;color:#f0f0f0;">RAND.</span>
<span style="position:absolute;white-space:pre;left:267.7px;top:164.6px;font-size:7px;line-height:9px;letter-spacing:-1.74px;font-weight:bold;color:#f0f0f0;">REP</span>
<span style="position:absolute;white-space:pre;left:287.6px;top:146.6px;font-size:33px;line-height:43px;letter-spacing:2.02px;font-weight:bold;color:#434346;font-style:italic;">X</span>
<div style="position:absolute;left:45px;top:187px;width:274px;height:115px;background:linear-gradient(180deg,#3c3c3e 0,#2e2e30 8%,#29292b 70%,#1e1e20 100%);border:1px solid #0c0c0c;border-top-color:#505052"></div>
<span style="position:absolute;white-space:pre;left:90.1px;top:188.7px;font-size:9.5px;line-height:12px;letter-spacing:0.29px;color:#747476;">X MULTIMEDIA SYSTEM - EQUALIZER</span>
<span style="position:absolute;white-space:pre;left:297.8px;top:190.2px;font-size:8px;line-height:10px;letter-spacing:6.40px;color:#4e4e50;">▴✕</span>
<div style="position:absolute;left:58px;top:206px;width:58px;height:11px;background:linear-gradient(180deg,#3e3e40,#1e1e20);border:1px solid #0c0c0c;border-top-color:#59595b"></div>
<div style="position:absolute;left:80px;top:208px;width:4px;height:7px;background:#555"></div>
<div style="position:absolute;left:86px;top:208px;width:14px;height:7px;background:#3a3a3c;border-left:1px solid #666"></div>
<span style="position:absolute;white-space:pre;left:61.3px;top:207.6px;font-size:7px;line-height:9px;letter-spacing:-1.00px;font-weight:bold;color:#e8e8e8;">ON</span>
<span style="position:absolute;white-space:pre;left:95.0px;top:207.6px;font-size:7px;line-height:9px;letter-spacing:-0.51px;font-weight:bold;color:#e8e8e8;">AUTO</span>
<div style="position:absolute;left:130px;top:202.5px;width:114px;height:21px;background-color:#0b1832;background-image:linear-gradient(90deg,rgba(30,70,140,.3) 1px,transparent 1px),linear-gradient(0deg,rgba(30,70,140,.3) 1px,transparent 1px);background-size:2px 2px;border:1px dotted #2a62ad"></div>
<div style="position:absolute;left:131px;top:212.5px;width:112px;height:1.5px;background:#2f8cf5"></div>
<div style="position:absolute;left:260.6px;top:206.5px;width:43.9px;height:10.5px;background:linear-gradient(180deg,#5a5a5c,#2c2c2e);border:1px solid #0e0e0e;border-top-color:#777"></div>
<span style="position:absolute;white-space:pre;left:266.7px;top:207.4px;font-size:7.5px;line-height:10px;letter-spacing:-0.16px;font-weight:bold;color:#ededed;">PRESETS</span>
<span style="position:absolute;white-space:pre;left:89.3px;top:220.7px;font-size:7.5px;line-height:10px;letter-spacing:-0.25px;font-weight:bold;color:#f2f2f2;">+20db</span>
<span style="position:absolute;white-space:pre;left:90.3px;top:249.4px;font-size:7.5px;line-height:10px;letter-spacing:-0.40px;font-weight:bold;color:#f2f2f2;">+ 0 db</span>
<span style="position:absolute;white-space:pre;left:89.4px;top:279.2px;font-size:7.5px;line-height:10px;letter-spacing:0.20px;font-weight:bold;color:#f2f2f2;">-20db</span>
<div style="position:absolute;left:70.3px;top:227px;width:3px;height:59px;background:linear-gradient(90deg,#111,#5a5a5c 60%,#222);border-radius:1px"></div><div style="position:absolute;left:68.3px;top:249px;width:7px;height:11px;background:radial-gradient(ellipse at 35% 40%,#707072,#2a2a2c 70%);border-radius:3px"></div>
<div style="position:absolute;left:127.2px;top:227px;width:3px;height:59px;background:linear-gradient(90deg,#111,#5a5a5c 60%,#222);border-radius:1px"></div><div style="position:absolute;left:125.2px;top:249px;width:7px;height:11px;background:radial-gradient(ellipse at 35% 40%,#707072,#2a2a2c 70%);border-radius:3px"></div>
<span style="position:absolute;white-space:pre;left:124.8px;top:286.5px;font-size:8px;line-height:10px;font-weight:bold;color:#f2f2f2;">60</span>
<div style="position:absolute;left:145.1px;top:227px;width:3px;height:59px;background:linear-gradient(90deg,#111,#5a5a5c 60%,#222);border-radius:1px"></div><div style="position:absolute;left:143.1px;top:249px;width:7px;height:11px;background:radial-gradient(ellipse at 35% 40%,#707072,#2a2a2c 70%);border-radius:3px"></div>
<span style="position:absolute;white-space:pre;left:140.4px;top:286.5px;font-size:8px;line-height:10px;font-weight:bold;color:#f2f2f2;">170</span>
<div style="position:absolute;left:163px;top:227px;width:3px;height:59px;background:linear-gradient(90deg,#111,#5a5a5c 60%,#222);border-radius:1px"></div><div style="position:absolute;left:161px;top:249px;width:7px;height:11px;background:radial-gradient(ellipse at 35% 40%,#707072,#2a2a2c 70%);border-radius:3px"></div>
<span style="position:absolute;white-space:pre;left:158.3px;top:286.5px;font-size:8px;line-height:10px;font-weight:bold;color:#f2f2f2;">310</span>
<div style="position:absolute;left:181px;top:227px;width:3px;height:59px;background:linear-gradient(90deg,#111,#5a5a5c 60%,#222);border-radius:1px"></div><div style="position:absolute;left:179px;top:249px;width:7px;height:11px;background:radial-gradient(ellipse at 35% 40%,#707072,#2a2a2c 70%);border-radius:3px"></div>
<span style="position:absolute;white-space:pre;left:176.3px;top:286.5px;font-size:8px;line-height:10px;font-weight:bold;color:#f2f2f2;">600</span>
<div style="position:absolute;left:199.1px;top:227px;width:3px;height:59px;background:linear-gradient(90deg,#111,#5a5a5c 60%,#222);border-radius:1px"></div><div style="position:absolute;left:197.1px;top:249px;width:7px;height:11px;background:radial-gradient(ellipse at 35% 40%,#707072,#2a2a2c 70%);border-radius:3px"></div>
<span style="position:absolute;white-space:pre;left:196.0px;top:286.5px;font-size:8px;line-height:10px;font-weight:bold;color:#f2f2f2;">1K</span>
<div style="position:absolute;left:217px;top:227px;width:3px;height:59px;background:linear-gradient(90deg,#111,#5a5a5c 60%,#222);border-radius:1px"></div><div style="position:absolute;left:215px;top:249px;width:7px;height:11px;background:radial-gradient(ellipse at 35% 40%,#707072,#2a2a2c 70%);border-radius:3px"></div>
<span style="position:absolute;white-space:pre;left:213.9px;top:286.5px;font-size:8px;line-height:10px;font-weight:bold;color:#f2f2f2;">3K</span>
<div style="position:absolute;left:235px;top:227px;width:3px;height:59px;background:linear-gradient(90deg,#111,#5a5a5c 60%,#222);border-radius:1px"></div><div style="position:absolute;left:233px;top:249px;width:7px;height:11px;background:radial-gradient(ellipse at 35% 40%,#707072,#2a2a2c 70%);border-radius:3px"></div>
<span style="position:absolute;white-space:pre;left:231.9px;top:286.5px;font-size:8px;line-height:10px;font-weight:bold;color:#f2f2f2;">6K</span>
<div style="position:absolute;left:252.9px;top:227px;width:3px;height:59px;background:linear-gradient(90deg,#111,#5a5a5c 60%,#222);border-radius:1px"></div><div style="position:absolute;left:250.9px;top:249px;width:7px;height:11px;background:radial-gradient(ellipse at 35% 40%,#707072,#2a2a2c 70%);border-radius:3px"></div>
<span style="position:absolute;white-space:pre;left:247.6px;top:286.5px;font-size:8px;line-height:10px;font-weight:bold;color:#f2f2f2;">12K</span>
<div style="position:absolute;left:271px;top:227px;width:3px;height:59px;background:linear-gradient(90deg,#111,#5a5a5c 60%,#222);border-radius:1px"></div><div style="position:absolute;left:269px;top:249px;width:7px;height:11px;background:radial-gradient(ellipse at 35% 40%,#707072,#2a2a2c 70%);border-radius:3px"></div>
<span style="position:absolute;white-space:pre;left:265.7px;top:286.5px;font-size:8px;line-height:10px;font-weight:bold;color:#f2f2f2;">14K</span>
<div style="position:absolute;left:289.1px;top:227px;width:3px;height:59px;background:linear-gradient(90deg,#111,#5a5a5c 60%,#222);border-radius:1px"></div><div style="position:absolute;left:287.1px;top:249px;width:7px;height:11px;background:radial-gradient(ellipse at 35% 40%,#707072,#2a2a2c 70%);border-radius:3px"></div>
<span style="position:absolute;white-space:pre;left:283.8px;top:286.5px;font-size:8px;line-height:10px;font-weight:bold;color:#f2f2f2;">16K</span>
<span style="position:absolute;white-space:pre;left:62.2px;top:288.0px;font-size:6.5px;line-height:8px;letter-spacing:-0.99px;font-weight:bold;color:#f2f2f2;">PREAMP</span>
<div style="position:absolute;left:319.5px;top:72px;width:298.5px;height:230px;background:linear-gradient(180deg,#3f3f41 0,#343436 6%,#2e2e30 80%,#222224 100%);border:1px solid #0c0c0c;border-top-color:#505052"></div>
<span style="position:absolute;white-space:pre;left:418.8px;top:73.7px;font-size:9.5px;line-height:12px;letter-spacing:0.33px;color:#8a8a8c;">PLAYLIST EDITOR</span>
<span style="position:absolute;white-space:pre;left:595.8px;top:74.2px;font-size:8px;line-height:10px;letter-spacing:6.40px;color:#57575a;">▴✕</span>
<div style="position:absolute;left:329px;top:87px;width:271.5px;height:181px;background:#0a0f0a;border-radius:3px 3px 8px 8px;box-shadow:0 0 0 1px #1a1c1c,0 -1px 0 1px #0c2230"></div>
<div style="position:absolute;left:604.5px;top:88px;width:5.5px;height:180px;background:#111214;border-radius:3px;border:1px solid #3c3c3e"></div>
<div style="position:absolute;left:605px;top:89px;width:4.5px;height:21px;background:linear-gradient(90deg,#1b4a7a,#4aa0e8 50%,#1b4a7a);border-radius:3px"></div>
<div style="position:absolute;left:333px;top:273px;width:22px;height:18px;background:linear-gradient(180deg,#5c5c5e,#3a3a3c);border:1px solid #1a1a1a;border-top-color:#7c7c7e;border-left-color:#6a6a6c"></div><span style="position:absolute;white-space:pre;left:342.2px;top:275.2px;font-size:6.5px;line-height:8px;letter-spacing:-0.32px;font-weight:bold;color:#f4f4f4;">+</span><span style="position:absolute;white-space:pre;left:336.4px;top:281.2px;font-size:6.5px;line-height:8px;letter-spacing:0.34px;font-weight:bold;color:#f4f4f4;">FILE</span>
<div style="position:absolute;left:363px;top:273px;width:21.5px;height:18px;background:linear-gradient(180deg,#5c5c5e,#3a3a3c);border:1px solid #1a1a1a;border-top-color:#7c7c7e;border-left-color:#6a6a6c"></div><span style="position:absolute;white-space:pre;left:372.1px;top:275.2px;font-size:6.5px;line-height:8px;letter-spacing:-0.44px;font-weight:bold;color:#f4f4f4;">–</span><span style="position:absolute;white-space:pre;left:366.1px;top:281.2px;font-size:6.5px;line-height:8px;letter-spacing:0.34px;font-weight:bold;color:#f4f4f4;">FILE</span>
<div style="position:absolute;left:391px;top:273px;width:21.5px;height:18px;background:linear-gradient(180deg,#5c5c5e,#3a3a3c);border:1px solid #1a1a1a;border-top-color:#7c7c7e;border-left-color:#6a6a6c"></div><span style="position:absolute;white-space:pre;left:395.3px;top:275.2px;font-size:6.5px;line-height:8px;letter-spacing:0.15px;font-weight:bold;color:#f4f4f4;">SEL</span><span style="position:absolute;white-space:pre;left:395.3px;top:281.2px;font-size:6.5px;line-height:8px;letter-spacing:0.14px;font-weight:bold;color:#f4f4f4;">ALL</span>
<div style="position:absolute;left:420.4px;top:273px;width:21.6px;height:18px;background:linear-gradient(180deg,#5c5c5e,#3a3a3c);border:1px solid #1a1a1a;border-top-color:#7c7c7e;border-left-color:#6a6a6c"></div><span style="position:absolute;white-space:pre;left:422.5px;top:275.2px;font-size:6.5px;line-height:8px;letter-spacing:0.31px;font-weight:bold;color:#f4f4f4;">MISC</span><span style="position:absolute;white-space:pre;left:423.5px;top:281.2px;font-size:6.5px;line-height:8px;letter-spacing:0.38px;font-weight:bold;color:#f4f4f4;">OPT.</span>
<div style="position:absolute;left:575.4px;top:273px;width:21.6px;height:18px;background:linear-gradient(180deg,#5c5c5e,#3a3a3c);border:1px solid #1a1a1a;border-top-color:#7c7c7e;border-left-color:#6a6a6c"></div><span style="position:absolute;white-space:pre;left:576.4px;top:275.2px;font-size:6.5px;line-height:8px;letter-spacing:0.36px;font-weight:bold;color:#f4f4f4;">LOAD</span><span style="position:absolute;white-space:pre;left:578.6px;top:281.2px;font-size:6.5px;line-height:8px;letter-spacing:0.26px;font-weight:bold;color:#f4f4f4;">LIST</span>
<div style="position:absolute;left:472.5px;top:272.5px;width:94.5px;height:10px;background:#0a1120;box-shadow:0 1px 0 #555"></div>
<span style="position:absolute;white-space:pre;left:475.7px;top:273.2px;font-size:8px;line-height:10px;letter-spacing:0.17px;font-weight:bold;color:#3d8eea;font-family:'Liberation Mono',monospace;">0:00/0:00</span>
<div style="position:absolute;left:531.5px;top:286px;width:35.5px;height:9.5px;background:#0a1120;box-shadow:0 1px 0 #444"></div>
<span style="position:absolute;white-space:pre;left:551.0px;top:286.6px;font-size:7px;line-height:9px;font-weight:bold;color:#3d8eea;font-family:'Liberation Mono',monospace;">:</span>
<div style="position:absolute;left:475.5px;top:287px;width:1.5px;height:7px;background:#6e6e70"></div>
<div style="position:absolute;left:477px;top:287px;width:0;height:0;border-top:3.5px solid transparent;border-bottom:3.5px solid transparent;border-right:4.5px solid #6e6e70"></div>
<div style="position:absolute;left:485px;top:287px;width:0;height:0;border-top:3.5px solid transparent;border-bottom:3.5px solid transparent;border-left:5px solid #6e6e70"></div>
<div style="position:absolute;left:493.5px;top:287.5px;width:1.7px;height:6px;background:#6e6e70"></div>
<div style="position:absolute;left:497px;top:287.5px;width:1.7px;height:6px;background:#6e6e70"></div>
<div style="position:absolute;left:503.5px;top:288px;width:5.5px;height:5.5px;background:#6e6e70"></div>
<div style="position:absolute;left:513px;top:287px;width:0;height:0;border-top:3.5px solid transparent;border-bottom:3.5px solid transparent;border-left:4.5px solid #6e6e70"></div>
<div style="position:absolute;left:517.5px;top:287px;width:1.5px;height:7px;background:#6e6e70"></div>
<div style="position:absolute;left:522.5px;top:287px;width:0;height:0;border-left:3.5px solid transparent;border-right:3.5px solid transparent;border-bottom:4px solid #6e6e70"></div>
<div style="position:absolute;left:522.5px;top:292px;width:7px;height:2px;background:#6e6e70"></div>
<svg style="position:absolute;left:602px;top:283px" width="15" height="15" viewBox="0 0 15 15"><path d="M14 2 L2 14 M14 6 L6 14 M14 10 L10 14" stroke="#58585a" stroke-width="1"/></svg>
</div>
<div id="grip" style="position:absolute;left:0;top:0">
<div style="position:absolute;left:32px;top:354px;width:600px;height:611px;background:#e8e8e7;border-radius:8px 8px 0 0;box-shadow:0 0 0 1px rgba(0,0,0,.35),0 4px 14px rgba(0,0,0,.5)"></div>
<div style="position:absolute;left:32px;top:354px;width:600px;height:36.7px;background:#f6f5f4;border-radius:7px 7px 0 0;border-bottom:1px solid #d9d5d1;box-shadow:inset 0 1px 0 #fff"></div>
<span style="position:absolute;white-space:pre;left:317.0px;top:363.8px;font-size:14px;line-height:18px;letter-spacing:0.24px;font-weight:bold;color:#919494;">Grip</span>
<div style="position:absolute;left:532.1px;top:358px;width:27.6px;height:27.6px;border-radius:50%;border:1px solid #dcd7d2;background:#f7f6f5"></div><div style="position:absolute;left:541.9px;top:373.6px;width:8px;height:2.4px;background:#8b8e8f"></div><div style="position:absolute;left:566.1px;top:358px;width:27.6px;height:27.6px;border-radius:50%;border:1px solid #dcd7d2;background:#f7f6f5"></div><div style="position:absolute;left:575.9px;top:367.8px;width:8px;height:8px;border:2px solid #8b8e8f"></div><div style="position:absolute;left:600.2px;top:358px;width:27.6px;height:27.6px;border-radius:50%;border:1px solid #dcd7d2;background:#f7f6f5"></div><svg style="position:absolute;left:609px;top:366.8px" width="10" height="10" viewBox="0 0 10 10"><path d="M1.3 1.3 L8.7 8.7 M8.7 1.3 L1.3 8.7" stroke="#8b8e8f" stroke-width="1.8"/></svg>
<div style="position:absolute;left:36px;top:423.5px;width:593px;height:451.5px;background:#fff;border:1px solid #c6c2bd"></div>
<div style="position:absolute;left:36px;top:397px;width:62.5px;height:27px;background:#efefee;border:1px solid #c6c2bd;border-bottom:1px solid #c6c2bd;border-radius:4px 4px 0 0"></div><span style="position:absolute;white-space:pre;left:44.4px;top:401.6px;font-size:14px;line-height:18px;letter-spacing:0.24px;color:#2e3436;">Ścieżki</span>
<div style="position:absolute;left:98px;top:397px;width:45px;height:27px;background:#efefee;border:1px solid #c6c2bd;border-bottom:1px solid #c6c2bd;border-radius:4px 4px 0 0"></div><span style="position:absolute;white-space:pre;left:104.0px;top:401.6px;font-size:14px;line-height:18px;letter-spacing:0.29px;color:#2e3436;">Ripuj</span>
<div style="position:absolute;left:242px;top:397px;width:59.5px;height:27px;background:#efefee;border:1px solid #c6c2bd;border-bottom:1px solid #c6c2bd;border-radius:4px 4px 0 0"></div><span style="position:absolute;white-space:pre;left:248.1px;top:401.6px;font-size:14px;line-height:18px;letter-spacing:0.27px;color:#2e3436;">Pomoc</span>
<div style="position:absolute;left:301px;top:397px;width:97.5px;height:27px;background:#efefee;border:1px solid #c6c2bd;border-bottom:1px solid #c6c2bd;border-radius:4px 4px 0 0"></div><span style="position:absolute;white-space:pre;left:307.4px;top:401.6px;font-size:14px;line-height:18px;letter-spacing:0.47px;color:#2e3436;">O programie</span>
<div style="position:absolute;left:142.5px;top:394.5px;width:100px;height:30.5px;background:#ffffff;border:1px solid #c6c2bd;border-bottom:none;border-radius:4px 4px 0 0"></div><span style="position:absolute;white-space:pre;left:151.0px;top:400.8px;font-size:14px;line-height:18px;letter-spacing:0.38px;color:#2e3436;">Konfiguracja</span>
<div style="position:absolute;left:41px;top:425px;width:583px;height:449px;background:#fff;border:1px solid #c6c2bd"></div>
<div style="position:absolute;left:42px;top:455px;width:581px;height:418px;background:#fff;border:1px solid #c6c2bd"></div>
<div style="position:absolute;left:46px;top:457px;width:572.5px;height:345px;background:#fff;border:1px solid #c6c2bd"></div>
<div style="position:absolute;left:42px;top:428.5px;width:37.8px;height:27px;background:#efefee;border:1px solid #c6c2bd;border-bottom:1px solid #c6c2bd;border-radius:4px 4px 0 0"></div><span style="position:absolute;white-space:pre;left:50.2px;top:433.1px;font-size:14px;line-height:18px;letter-spacing:0.20px;color:#2e3436;">CD</span>
<div style="position:absolute;left:79.4px;top:428.5px;width:47.3px;height:27px;background:#efefee;border:1px solid #c6c2bd;border-bottom:1px solid #c6c2bd;border-radius:4px 4px 0 0"></div><span style="position:absolute;white-space:pre;left:85.0px;top:433.1px;font-size:14px;line-height:18px;letter-spacing:0.26px;color:#2e3436;">Ripuj</span>
<div style="position:absolute;left:126.3px;top:428.5px;width:67.1px;height:27px;background:#efefee;border:1px solid #c6c2bd;border-bottom:1px solid #c6c2bd;border-radius:4px 4px 0 0"></div><span style="position:absolute;white-space:pre;left:132.6px;top:433.1px;font-size:14px;line-height:18px;letter-spacing:0.39px;color:#2e3436;">Zakoduj</span>
<div style="position:absolute;left:193px;top:428.5px;width:35px;height:27px;background:#efefee;border:1px solid #c6c2bd;border-bottom:1px solid #c6c2bd;border-radius:4px 4px 0 0"></div><span style="position:absolute;white-space:pre;left:198.5px;top:433.1px;font-size:14px;line-height:18px;letter-spacing:0.89px;color:#2e3436;">ID3</span>
<div style="position:absolute;left:353px;top:428.5px;width:51px;height:27px;background:#efefee;border:1px solid #c6c2bd;border-bottom:1px solid #c6c2bd;border-radius:4px 4px 0 0"></div><span style="position:absolute;white-space:pre;left:359.0px;top:433.1px;font-size:14px;line-height:18px;letter-spacing:0.22px;color:#2e3436;">Proxy</span>
<div style="position:absolute;left:403.6px;top:428.5px;width:54.9px;height:27px;background:#efefee;border:1px solid #c6c2bd;border-bottom:1px solid #c6c2bd;border-radius:4px 4px 0 0"></div><span style="position:absolute;white-space:pre;left:409.7px;top:433.1px;font-size:14px;line-height:18px;letter-spacing:-0.04px;color:#2e3436;">Różne</span>
<div style="position:absolute;left:227.5px;top:426.5px;width:126px;height:30px;background:#ffffff;border:1px solid #c6c2bd;border-bottom:none;border-radius:4px 4px 0 0"></div><span style="position:absolute;white-space:pre;left:235.7px;top:432.3px;font-size:14px;line-height:18px;letter-spacing:0.16px;color:#2e3436;">Baza danych płyt</span>
<div style="position:absolute;left:50px;top:490px;width:564.5px;height:84px;background:#fff;border:1px solid #c6c2bd"></div>
<div style="position:absolute;left:55px;top:492.5px;width:554.5px;height:79px;background:#fff;border:1px solid #c6c2bd"></div>
<div style="position:absolute;left:167px;top:464px;width:143.5px;height:26.5px;background:#efefee;border:1px solid #c6c2bd;border-bottom:1px solid #c6c2bd;border-radius:4px 4px 0 0"></div><span style="position:absolute;white-space:pre;left:173.4px;top:468.7px;font-size:14px;line-height:18px;letter-spacing:0.37px;color:#2e3436;">Serwer pomocniczy</span>
<div style="position:absolute;left:50.5px;top:461.5px;width:117px;height:30px;background:#ffffff;border:1px solid #c6c2bd;border-bottom:none;border-radius:4px 4px 0 0"></div><span style="position:absolute;white-space:pre;left:59.6px;top:468.0px;font-size:14px;line-height:18px;letter-spacing:0.48px;color:#2e3436;">Główny serwer</span>
<span style="position:absolute;white-space:pre;left:59.7px;top:504.8px;font-size:14px;line-height:18px;letter-spacing:0.22px;color:#2e3436;">Serwer bazy danych</span>
<div style="position:absolute;left:196px;top:497px;width:407.5px;height:33px;background:#fff;border:1px solid #c6c2bd;border-radius:4px;box-shadow:inset 0 1px 1px rgba(0,0,0,.05)"></div><span style="position:absolute;white-space:pre;left:206.8px;top:504.8px;font-size:14px;line-height:18px;letter-spacing:0.50px;color:#000;">freedb.freedb.org</span>
<span style="position:absolute;white-space:pre;left:59.7px;top:541.5px;font-size:14px;line-height:18px;letter-spacing:-0.01px;color:#2e3436;">Ścieżka CGI</span>
<div style="position:absolute;left:143px;top:534.6px;width:460.5px;height:32.4px;background:#fff;border:1px solid #c6c2bd;border-radius:4px;box-shadow:inset 0 1px 1px rgba(0,0,0,.05)"></div><span style="position:absolute;white-space:pre;left:153.8px;top:541.5px;font-size:14px;line-height:18px;letter-spacing:0.35px;color:#000;">~cddb/cddb.cgi</span>
<span style="position:absolute;white-space:pre;left:50.2px;top:586.7px;font-size:14px;line-height:18px;letter-spacing:0.17px;color:#2e3436;">Email wysyłany do bazy danych</span>
<div style="position:absolute;left:258px;top:579px;width:355px;height:33px;background:#fff;border:1px solid #c6c2bd;border-radius:4px;box-shadow:inset 0 1px 1px rgba(0,0,0,.05)"></div><span style="position:absolute;white-space:pre;left:268.8px;top:586.7px;font-size:14px;line-height:18px;letter-spacing:0.64px;color:#000;">freedb-submit@freedb.org</span>
<span style="position:absolute;white-space:pre;left:50.2px;top:625.6px;font-size:14px;line-height:18px;letter-spacing:0.16px;color:#2e3436;">Kodowanie znaków bazy danych</span>
<div style="position:absolute;left:264.5px;top:618px;width:348.5px;height:33px;background:#fff;border:1px solid #c6c2bd;border-radius:4px;box-shadow:inset 0 1px 1px rgba(0,0,0,.05)"></div><span style="position:absolute;white-space:pre;left:273.6px;top:625.6px;font-size:14px;line-height:18px;letter-spacing:1.14px;color:#000;">UTF-8</span>
<div style="position:absolute;left:52px;top:660.3px;width:16px;height:16px;background:linear-gradient(180deg,#f6f5f4,#eceae8);border:1px solid #b6b0aa;border-radius:3px"></div><svg style="position:absolute;left:54px;top:662.3px" width="12" height="12" viewBox="0 0 12 12"><path d="M1.4 6 L4.8 9.6 L10.8 2.2" stroke="#2e3436" stroke-width="2.6" fill="none"/></svg><span style="position:absolute;white-space:pre;left:74.5px;top:658.8px;font-size:14px;line-height:18px;letter-spacing:0.33px;color:#2e3436;">Używaj rozszerzeń freedb</span>
<div style="position:absolute;left:52px;top:687.3px;width:16px;height:16px;background:linear-gradient(180deg,#f6f5f4,#eceae8);border:1px solid #b6b0aa;border-radius:3px"></div><svg style="position:absolute;left:54px;top:689.3px" width="12" height="12" viewBox="0 0 12 12"><path d="M1.4 6 L4.8 9.6 L10.8 2.2" stroke="#2e3436" stroke-width="2.6" fill="none"/></svg><span style="position:absolute;white-space:pre;left:75.5px;top:686.1px;font-size:14px;line-height:18px;letter-spacing:0.30px;color:#2e3436;">Automatycznie wykonuj sprawdzanie dysku</span>
<div style="position:absolute;left:35.5px;top:879.5px;width:593.5px;height:33.5px;background:#0a0a0a"></div>
<div style="position:absolute;left:35.5px;top:879.5px;width:593.5px;height:32px;background:#86986f;border:2px solid #0a0a0a;border-radius:6px"></div>
<span style="position:absolute;white-space:pre;left:130.1px;top:890.0px;font-size:10px;line-height:13px;letter-spacing:1.80px;font-weight:bold;color:#46543a;font-family:'Liberation Mono',monospace;">--</span>
<span style="position:absolute;white-space:pre;left:314.1px;top:890.0px;font-size:10px;line-height:13px;letter-spacing:0.83px;font-weight:bold;color:#46543a;font-family:'Liberation Mono',monospace;">--:--</span>
<div style="position:absolute;left:35.5px;top:912px;width:593.5px;height:49.5px;background:#161616"></div>
<div style="position:absolute;left:36px;top:912px;width:98px;height:24.5px;background:#444;border:1px solid #161616;box-shadow:inset 1px 1px 0 #4e4e4e"></div>
<svg style="position:absolute;left:73px;top:915.6px;overflow:visible" width="24" height="16" viewBox="-12 -8 24 16"><path d="M-8 -4.5 L-1 0 L-8 4.5 Z M2.5 -4 H4.3 V4 H2.5 Z M6.5 -4 H8.3 V4 H6.5 Z" fill="#fff"/></svg>
<div style="position:absolute;left:134px;top:912px;width:99px;height:24.5px;background:#444;border:1px solid #161616;box-shadow:inset 1px 1px 0 #4e4e4e"></div>
<svg style="position:absolute;left:171.5px;top:915.6px;overflow:visible" width="24" height="16" viewBox="-12 -8 24 16"><path d="M0 -3.5 V3.5 L-5.5 0 Z M5.5 -3.5 V3.5 L0 0 Z" fill="#fff"/></svg>
<div style="position:absolute;left:233px;top:912px;width:98px;height:24.5px;background:#444;border:1px solid #161616;box-shadow:inset 1px 1px 0 #4e4e4e"></div>
<svg style="position:absolute;left:270px;top:915.6px;overflow:visible" width="24" height="16" viewBox="-12 -8 24 16"><path d="M-5.5 -3.5 V3.5 L0 0 Z M0 -3.5 V3.5 L5.5 0 Z" fill="#fff"/></svg>
<div style="position:absolute;left:331px;top:912px;width:99px;height:24.5px;background:#444;border:1px solid #161616;box-shadow:inset 1px 1px 0 #4e4e4e"></div>
<svg style="position:absolute;left:368.5px;top:915.6px;overflow:visible" width="24" height="16" viewBox="-12 -8 24 16"><path d="M-6.5 -4 H-5 V4 H-6.5 Z M0.5 -3.5 V3.5 L-5 0 Z M6 -3.5 V3.5 L0.5 0 Z" fill="#fff"/></svg>
<div style="position:absolute;left:430px;top:912px;width:99px;height:24.5px;background:#444;border:1px solid #161616;box-shadow:inset 1px 1px 0 #4e4e4e"></div>
<svg style="position:absolute;left:467.5px;top:915.6px;overflow:visible" width="24" height="16" viewBox="-12 -8 24 16"><path d="M5 -4 H6.5 V4 H5 Z M-6 -3.5 V3.5 L-0.5 0 Z M-0.5 -3.5 V3.5 L5 0 Z" fill="#fff"/></svg>
<div style="position:absolute;left:529px;top:912px;width:100px;height:24.5px;background:#444;border:1px solid #161616;box-shadow:inset 1px 1px 0 #4e4e4e"></div>
<svg style="position:absolute;left:567px;top:915.6px;overflow:visible" width="24" height="16" viewBox="-12 -8 24 16"><text x="-7" y="3" font-family="Liberation Sans" font-size="7.5" fill="#fff" letter-spacing="0.6">123</text></svg>
<div style="position:absolute;left:36px;top:936.5px;width:73px;height:25px;background:#444;border:1px solid #161616;box-shadow:inset 1px 1px 0 #4e4e4e"></div>
<svg style="position:absolute;left:60.5px;top:941px;overflow:visible" width="24" height="16" viewBox="-12 -8 24 16"><rect x="-4" y="-4" width="8" height="8" fill="#fff"/></svg>
<div style="position:absolute;left:109px;top:936.5px;width:74px;height:25px;background:#444;border:1px solid #161616;box-shadow:inset 1px 1px 0 #4e4e4e"></div>
<svg style="position:absolute;left:134px;top:941px;overflow:visible" width="24" height="16" viewBox="-12 -8 24 16"><path d="M-5 1 L0 -4.5 L5 1 Z M-5 2.5 H5 V4.5 H-5 Z" fill="#fff"/></svg>
<div style="position:absolute;left:183px;top:936.5px;width:74px;height:25px;background:#444;border:1px solid #161616;box-shadow:inset 1px 1px 0 #4e4e4e"></div>
<svg style="position:absolute;left:208px;top:941px;overflow:visible" width="24" height="16" viewBox="-12 -8 24 16"><circle cx="0" cy="0" r="5" fill="none" stroke="#fff" stroke-width="1.2"/><circle cx="0" cy="0" r="1.3" fill="#fff"/></svg>
<div style="position:absolute;left:257px;top:936.5px;width:74px;height:25px;background:#444;border:1px solid #161616;box-shadow:inset 1px 1px 0 #4e4e4e"></div>
<svg style="position:absolute;left:282px;top:941px;overflow:visible" width="24" height="16" viewBox="-12 -8 24 16"><path d="M-6 -1.5 H-4 L-1.5 -4 V4 L-4 1.5 H-6 Z" fill="#fff"/><path d="M1 -2 A2.6 2.6 0 0 1 1 2 M3 -4 A5 5 0 0 1 3 4" stroke="#fff" stroke-width="1.1" fill="none"/></svg>
<div style="position:absolute;left:331px;top:936.5px;width:74px;height:25px;background:#444;border:1px solid #161616;box-shadow:inset 1px 1px 0 #4e4e4e"></div>
<svg style="position:absolute;left:356px;top:941px;overflow:visible" width="24" height="16" viewBox="-12 -8 24 16"><path d="M-3.5 6.5 L-2.5 2 L2 -6 L4.5 -4.5 L0 3.5 Z" fill="none" stroke="#fff" stroke-width="1.2"/><path d="M1 -4.5 L3.6 -3" stroke="#fff" stroke-width="1"/></svg>
<div style="position:absolute;left:405px;top:936.5px;width:74px;height:25px;background:#444;border:1px solid #161616;box-shadow:inset 1px 1px 0 #4e4e4e"></div>
<svg style="position:absolute;left:430px;top:941px;overflow:visible" width="24" height="16" viewBox="-12 -8 24 16"><rect x="-6" y="-5.5" width="4.5" height="4" fill="none" stroke="#fff" stroke-width="1.2"/><rect x="1.5" y="0.5" width="4.5" height="4" fill="none" stroke="#fff" stroke-width="1.2"/><path d="M-3.7 -1 V2.5 H1.5 M2 6.5 H5.5 M3.7 4.5 V6.5" stroke="#fff" stroke-width="1" fill="none"/></svg>
<div style="position:absolute;left:479px;top:936.5px;width:74px;height:25px;background:#444;border:1px solid #161616;box-shadow:inset 1px 1px 0 #4e4e4e"></div>
<svg style="position:absolute;left:504px;top:941px;overflow:visible" width="24" height="16" viewBox="-12 -8 24 16"><rect x="-4.5" y="-4.5" width="9" height="9" fill="none" stroke="#fff" stroke-width="1.3"/><rect x="-4.5" y="-4.5" width="9" height="2.6" fill="#fff"/></svg>
<div style="position:absolute;left:553px;top:936.5px;width:76px;height:25px;background:#444;border:1px solid #161616;box-shadow:inset 1px 1px 0 #4e4e4e"></div>
<svg style="position:absolute;left:579px;top:941px;overflow:visible" width="24" height="16" viewBox="-12 -8 24 16"><path d="M-2.6 -3.2 A4.3 4.3 0 1 0 2.6 -3.2" stroke="#fff" stroke-width="1.2" fill="none"/><path d="M0 -5.5 V-0.5" stroke="#fff" stroke-width="1.3"/></svg>
</div>
<div id="ustaw" style="position:absolute;left:0;top:0">
<div style="position:absolute;left:655px;top:73px;width:979px;height:446px;background:#d6d6d6;border-radius:7px 7px 0 0;box-shadow:0 0 0 1px rgba(0,0,0,.3),0 3px 12px rgba(0,0,0,.4)"></div>
<div style="position:absolute;left:655px;top:73px;width:979px;height:36.5px;background:#f6f5f4;border-radius:7px 7px 0 0;border-bottom:1px solid #dcd8d4;box-shadow:inset 0 1px 0 #fff"></div><span style="position:absolute;white-space:pre;left:1106.8px;top:82.6px;font-size:14px;line-height:18px;letter-spacing:0.09px;font-weight:bold;color:#919494;">Ustawienia</span>
<div style="position:absolute;left:1602.2px;top:77.2px;width:27.6px;height:27.6px;border-radius:50%;border:1px solid #dcd7d2;background:#f7f6f5"></div><svg style="position:absolute;left:1611px;top:86px" width="10" height="10" viewBox="0 0 10 10"><path d="M1.3 1.3 L8.7 8.7 M8.7 1.3 L1.3 8.7" stroke="#8b8e8f" stroke-width="1.8"/></svg>
<div style="position:absolute;left:852px;top:122px;width:126px;height:28px;background:#c3c3c3;border:1px solid;border-color:#fff #000 #c3c3c3 #fff;border-bottom:none"></div><span style="position:absolute;white-space:pre;left:857.3px;top:126.0px;font-size:16px;line-height:21px;letter-spacing:-0.03px;">Wtyczki efektów</span>
<div style="position:absolute;left:978px;top:122px;width:118px;height:28px;background:#c3c3c3;border:1px solid;border-color:#fff #000 #c3c3c3 #fff;border-bottom:none"></div><span style="position:absolute;white-space:pre;left:984.1px;top:126.0px;font-size:16px;line-height:21px;letter-spacing:-0.07px;">Wtyczki ogólne</span>
<div style="position:absolute;left:1096px;top:122px;width:149px;height:28px;background:#c3c3c3;border:1px solid;border-color:#fff #000 #c3c3c3 #fff;border-bottom:none"></div><span style="position:absolute;white-space:pre;left:1102.0px;top:126.0px;font-size:16px;line-height:21px;letter-spacing:-0.08px;">Wtyczki wizualizacji</span>
<div style="position:absolute;left:1245px;top:122px;width:53px;height:28px;background:#c3c3c3;border:1px solid;border-color:#fff #000 #c3c3c3 #fff;border-bottom:none"></div><span style="position:absolute;white-space:pre;left:1250.5px;top:126.0px;font-size:16px;line-height:21px;letter-spacing:0.04px;">Opcje</span>
<div style="position:absolute;left:1298px;top:122px;width:70px;height:28px;background:#c3c3c3;border:1px solid;border-color:#fff #000 #c3c3c3 #fff;border-bottom:none"></div><span style="position:absolute;white-space:pre;left:1303.4px;top:126.0px;font-size:16px;line-height:21px;letter-spacing:-0.07px;">Czcionki</span>
<div style="position:absolute;left:1368px;top:122px;width:48px;height:28px;background:#c3c3c3;border:1px solid;border-color:#fff #000 #c3c3c3 #fff;border-bottom:none"></div><span style="position:absolute;white-space:pre;left:1373.5px;top:126.0px;font-size:16px;line-height:21px;letter-spacing:0.19px;">Tytu³</span>
<div style="position:absolute;left:665px;top:150px;width:959px;height:311px;background:#d6d6d6;border:1px solid;border-color:#fff #000 #000 #fff;box-shadow:inset -1px -1px 0 #b9b9b9"></div>
<div style="position:absolute;left:665px;top:120px;width:187px;height:31px;background:#d6d6d6;border:1px solid;border-color:#fff #000 transparent #fff;border-bottom:none;border-radius:2px 0 0 0"></div>
<span style="position:absolute;white-space:pre;left:672.5px;top:125.0px;font-size:16px;line-height:21px;letter-spacing:0.10px;">Wtyczki we/wy d¼wiêku</span>
<div style="position:absolute;left:672px;top:165px;width:945px;height:168px;border:1px solid;border-color:#8f8f8f #fff #fff #8f8f8f;box-shadow:inset 1px 1px 0 #fff,inset -1px -1px 0 #8f8f8f"></div><div style="position:absolute;left:675px;top:163px;width:140px;height:6px;background:#d6d6d6"></div><span style="position:absolute;white-space:pre;left:678.3px;top:154.5px;font-size:16px;line-height:21px;letter-spacing:0.03px;color:#000;">Wtyczki wej¶ciowe</span>
<div style="position:absolute;left:685px;top:187px;width:902px;height:92px;background:#fff;border:1px solid;border-color:#000 #fff #fff #000"></div>
<div style="position:absolute;left:686px;top:188px;width:899px;height:26px;background:#d6d6d6;border:1px solid;border-color:#fff #000 #000 #fff"></div>
<span style="position:absolute;white-space:pre;left:690.3px;top:190.2px;font-size:16px;line-height:21px;letter-spacing:-0.01px;">Wtyczki wej¶ciowe</span>
<div style="position:absolute;left:853px;top:214px;width:4px;height:1px;background:#555"></div>
<div style="position:absolute;left:981px;top:214px;width:4px;height:1px;background:#555"></div>
<div style="position:absolute;left:1012px;top:214px;width:4px;height:1px;background:#555"></div>
<div style="position:absolute;left:1030px;top:214px;width:4px;height:1px;background:#555"></div>
<div style="position:absolute;left:1080px;top:214px;width:4px;height:1px;background:#555"></div>
<span style="position:absolute;white-space:pre;left:690.3px;top:216.4px;font-size:16px;line-height:21px;letter-spacing:0.11px;">Odtwarzacz Ogg Vorbis 1.2.11   [libvorbis.so]</span>
<div style="position:absolute;left:686px;top:237px;width:900px;height:19px;background:#00009c"></div>
<span style="position:absolute;white-space:pre;left:690.3px;top:235.0px;font-size:16px;line-height:21px;letter-spacing:0.20px;color:#fff;">Odtwarzacz p³yt CD Audio 1.2.11   [libcdaudio.so]</span>
<span style="position:absolute;white-space:pre;left:690.3px;top:255.2px;font-size:16px;line-height:21px;letter-spacing:0.21px;">Odtwarzacz wave 1.2.11   [libwav.so]</span>
<div style="position:absolute;left:1591px;top:187px;width:14px;height:114px;background:#c3c3c3;border:1px solid;border-color:#000 #fff #fff #000;box-shadow:inset 1px 1px 0 #b9b9b9"></div>
<svg style="position:absolute;left:1592px;top:188.5px" width="12" height="12" viewBox="0 0 12 12"><path d="M1 10 L6 1 L11 10 Z" fill="#d6d6d6" stroke="#000" stroke-width="1"/></svg>
<div style="position:absolute;left:679px;top:295px;width:96px;height:26px;background:#d6d6d6;border:1px solid;border-color:#fff #000 #000 #fff;box-shadow:inset -1px -1px 0 #b9b9b9"></div><span style="position:absolute;white-space:pre;left:690.2px;top:297.6px;font-size:16px;line-height:21px;letter-spacing:0.19px;color:#000;">Konfiguruj</span>
<div style="position:absolute;left:784px;top:295px;width:98px;height:26px;background:#d6d6d6;border:1px solid;border-color:#fff #000 #000 #fff;box-shadow:inset -1px -1px 0 #b9b9b9"></div><span style="position:absolute;white-space:pre;left:793.9px;top:297.6px;font-size:16px;line-height:21px;letter-spacing:0.27px;color:#8d8d8d;text-shadow:1px 1px 0 #fff;">Informacje</span>
<div style="position:absolute;left:672px;top:353px;width:945px;height:101px;border:1px solid;border-color:#8f8f8f #fff #fff #8f8f8f;box-shadow:inset 1px 1px 0 #fff,inset -1px -1px 0 #8f8f8f"></div><div style="position:absolute;left:675px;top:351px;width:146px;height:6px;background:#d6d6d6"></div><span style="position:absolute;white-space:pre;left:678.3px;top:342.4px;font-size:16px;line-height:21px;letter-spacing:0.04px;color:#000;">Wtyczka wyj¶ciowa</span>
<div style="position:absolute;left:679px;top:368px;width:930px;height:31px;background:#d6d6d6;border:1px solid;border-color:#fff #000 #000 #fff;box-shadow:inset -1px -1px 0 #b9b9b9"></div>
<span style="position:absolute;white-space:pre;left:688.3px;top:371.6px;font-size:16px;line-height:21px;letter-spacing:0.23px;">1.2.11 wtyczka wyj¶ciowa ALSA 1.2.11   [libALSA.so]</span>
<div style="position:absolute;left:679px;top:416px;width:96px;height:26px;background:#d6d6d6;border:1px solid;border-color:#fff #000 #000 #fff;box-shadow:inset -1px -1px 0 #b9b9b9"></div><span style="position:absolute;white-space:pre;left:690.2px;top:418.4px;font-size:16px;line-height:21px;letter-spacing:0.19px;color:#000;">Konfiguruj</span>
<div style="position:absolute;left:784px;top:416px;width:98px;height:26px;background:#d6d6d6;border:1px solid;border-color:#fff #000 #000 #fff;box-shadow:inset -1px -1px 0 #b9b9b9"></div><span style="position:absolute;white-space:pre;left:793.9px;top:418.4px;font-size:16px;line-height:21px;letter-spacing:0.27px;color:#000;">Informacje</span>
<div style="position:absolute;left:1447px;top:478px;width:74px;height:26px;background:#d6d6d6;border:1px solid;border-color:#fff #000 #000 #fff;box-shadow:inset -1px -1px 0 #b9b9b9"></div><span style="position:absolute;white-space:pre;left:1458.6px;top:480.2px;font-size:16px;line-height:21px;letter-spacing:-0.10px;color:#000;">Anuluj</span>
<div style="position:absolute;left:1537px;top:478px;width:82px;height:26px;background:#d6d6d6;border:1px solid;border-color:#fff #000 #000 #fff;box-shadow:inset -1px -1px 0 #b9b9b9"></div><span style="position:absolute;white-space:pre;left:1546.9px;top:480.2px;font-size:16px;line-height:21px;letter-spacing:0.07px;color:#000;">Zastosuj</span>
</div>
<div id="konf" style="position:absolute;left:0;top:0">
<div style="position:absolute;left:913px;top:404px;width:567px;height:556px;background:#d6d6d6;border-radius:7px 7px 0 0;box-shadow:0 0 0 1px rgba(0,0,0,.3),0 3px 12px rgba(0,0,0,.4)"></div>
<div style="position:absolute;left:913px;top:404px;width:567px;height:37px;background:#f6f5f4;border-radius:7px 7px 0 0;border-bottom:1px solid #dcd8d4;box-shadow:inset 0 1px 0 #fff"></div><span style="position:absolute;white-space:pre;left:1078.5px;top:414.5px;font-size:14px;line-height:18px;letter-spacing:-0.13px;font-weight:bold;color:#919494;">Konfiguracja odtwarzacza CD Audio</span>
<div style="position:absolute;left:1414.2px;top:410.2px;width:27.6px;height:27.6px;border-radius:50%;border:1px solid #dcd7d2;background:#f7f6f5"></div><div style="position:absolute;left:1424px;top:425.8px;width:8px;height:2.4px;background:#8b8e8f"></div><div style="position:absolute;left:1448px;top:410.2px;width:27.6px;height:27.6px;border-radius:50%;border:1px solid #dcd7d2;background:#f7f6f5"></div><svg style="position:absolute;left:1456.8px;top:419px" width="10" height="10" viewBox="0 0 10 10"><path d="M1.3 1.3 L8.7 8.7 M8.7 1.3 L1.3 8.7" stroke="#8b8e8f" stroke-width="1.8"/></svg>
<div style="position:absolute;left:924px;top:455px;width:92px;height:28px;background:#c3c3c3;border:1px solid;border-color:#fff transparent transparent #fff"></div>
<span style="position:absolute;white-space:pre;left:928.5px;top:457.8px;font-size:16px;line-height:21px;letter-spacing:0.15px;">Urz±dzenie</span>
<div style="position:absolute;left:924px;top:481px;width:547px;height:424px;background:#d6d6d6;border:1px solid;border-color:#fff #000 #000 #fff;box-shadow:inset -1px -1px 0 #b9b9b9"></div>
<div style="position:absolute;left:1015px;top:452px;width:180px;height:32px;background:#d6d6d6;border:1px solid;border-color:#fff #000 transparent #fff;border-bottom:none;box-shadow:inset -1px 0 0 #b9b9b9"></div>
<span style="position:absolute;white-space:pre;left:1020.0px;top:456.6px;font-size:16px;line-height:21px;letter-spacing:0.23px;">Informacje o p³ycie CD</span>
<div style="position:absolute;left:930px;top:498px;width:533px;height:85px;border:1px solid;border-color:#8f8f8f #fff #fff #8f8f8f;box-shadow:inset 1px 1px 0 #fff,inset -1px -1px 0 #8f8f8f"></div><div style="position:absolute;left:933px;top:496px;width:57px;height:6px;background:#d6d6d6"></div><span style="position:absolute;white-space:pre;left:935.3px;top:486.5px;font-size:16px;line-height:21px;letter-spacing:0.54px;color:#000;">CDDB:</span>
<div style="position:absolute;left:940px;top:523px;width:10px;height:10px;background:#c3c3c3;border:1px solid;border-color:#000 #fff #fff #000;box-shadow:inset 1px 1px 0 #6e6e6e"></div>
<span style="position:absolute;white-space:pre;left:953.6px;top:515.4px;font-size:16px;line-height:21px;letter-spacing:0.29px;">Korzystaj z CDDB</span>
<div style="position:absolute;left:1102px;top:513px;width:178px;height:28px;background:#d6d6d6;border:1px solid;border-color:#fff #000 #000 #fff;box-shadow:inset -1px -1px 0 #b9b9b9"></div><span style="position:absolute;white-space:pre;left:1107.0px;top:515.4px;font-size:16px;line-height:21px;letter-spacing:-0.00px;color:#000;">Wy¶wietl okno sieciowe</span>
<div style="position:absolute;left:1288px;top:513px;width:169px;height:28px;background:#d6d6d6;border:1px solid;border-color:#fff #000 #000 #fff;box-shadow:inset -1px -1px 0 #b9b9b9"></div><span style="position:absolute;white-space:pre;left:1291.9px;top:515.4px;font-size:16px;line-height:21px;letter-spacing:-0.01px;color:#000;">Pobierz listê serwerów</span>
<span style="position:absolute;white-space:pre;left:937.3px;top:552.7px;font-size:16px;line-height:21px;letter-spacing:0.24px;">Serwer CDDB:</span>
<div style="position:absolute;left:1049px;top:552px;width:407px;height:25px;background:#fff;border:1px solid;border-color:#000 #fff #fff #000;box-shadow:inset 1px 1px 0 #000,inset -1px -1px 0 #d6d6d6"></div>
<span style="position:absolute;white-space:pre;left:1054.0px;top:552.7px;font-size:16px;line-height:21px;letter-spacing:-0.03px;">freedb.freedb.org</span>
<div style="position:absolute;left:930px;top:597px;width:533px;height:138px;border:1px solid;border-color:#8f8f8f #fff #fff #8f8f8f;box-shadow:inset 1px 1px 0 #fff,inset -1px -1px 0 #8f8f8f"></div><div style="position:absolute;left:933px;top:595px;width:119px;height:6px;background:#d6d6d6"></div><span style="position:absolute;white-space:pre;left:934.3px;top:587.2px;font-size:16px;line-height:21px;letter-spacing:0.21px;color:#000;">Nazwy ¶cie¿ek:</span>
<div style="position:absolute;left:940px;top:623px;width:10px;height:10px;background:#d6d6d6;border:1px solid;border-color:#fff #000 #000 #fff;box-shadow:inset -1px -1px 0 #8f8f8f"></div>
<span style="position:absolute;white-space:pre;left:953.0px;top:615.6px;font-size:16px;line-height:21px;letter-spacing:0.20px;">Nie stosuj ogólnych tytu³ów</span>
<span style="position:absolute;white-space:pre;left:936.2px;top:653.2px;font-size:16px;line-height:21px;letter-spacing:0.35px;color:#8d8d8d;text-shadow:1px 1px 0 #fff;">Format nazwy:</span>
<div style="position:absolute;left:1049px;top:652px;width:408px;height:25px;background:#e6e6e6;border:1px solid;border-color:#000 #fff #fff #000;box-shadow:inset 1px 1px 0 #000"></div>
<span style="position:absolute;white-space:pre;left:1052.3px;top:653.2px;font-size:16px;line-height:21px;letter-spacing:0.30px;color:#8d8d8d;">%p - %t</span>
<span style="position:absolute;white-space:pre;left:937.0px;top:686.1px;font-size:16px;line-height:21px;letter-spacing:0.12px;color:#8d8d8d;text-shadow:1px 1px 0 #fff;">%p: Wykonawca/Artysta</span>
<span style="position:absolute;white-space:pre;left:1217.7px;top:686.1px;font-size:16px;line-height:21px;letter-spacing:0.15px;color:#8d8d8d;text-shadow:1px 1px 0 #fff;">%t:  Nazwa ¶cie¿ki</span>
<span style="position:absolute;white-space:pre;left:937.0px;top:708.7px;font-size:16px;line-height:21px;letter-spacing:0.21px;color:#8d8d8d;text-shadow:1px 1px 0 #fff;">%a: Album</span>
<span style="position:absolute;white-space:pre;left:1217.7px;top:708.7px;font-size:16px;line-height:21px;letter-spacing:0.17px;color:#8d8d8d;text-shadow:1px 1px 0 #fff;">%n: Numer ¶cie¿ki</span>
<div style="position:absolute;left:1300px;top:919px;width:76px;height:27px;background:#d6d6d6;border:1px solid;border-color:#fff #000 #000 #fff;box-shadow:inset -1px -1px 0 #b9b9b9"></div><span style="position:absolute;white-space:pre;left:1326.6px;top:922.3px;font-size:16px;line-height:21px;letter-spacing:-0.80px;color:#000;">OK</span>
<div style="position:absolute;left:1390px;top:919px;width:76px;height:27px;background:#d6d6d6;border:1px solid;border-color:#fff #000 #000 #fff;box-shadow:inset -1px -1px 0 #b9b9b9"></div><span style="position:absolute;white-space:pre;left:1406.2px;top:922.3px;font-size:16px;line-height:21px;letter-spacing:-0.08px;color:#000;">Anuluj</span>
</div>
<div id="serw" style="position:absolute;left:0;top:0">
<div style="position:absolute;left:913px;top:232.5px;width:705px;height:177.5px;background:#d6d6d6;border-radius:8px 8px 0 0;box-shadow:0 0 0 1px rgba(0,0,0,.35),0 8px 22px rgba(0,0,0,.55)"></div>
<div style="position:absolute;left:913px;top:232.5px;width:705px;height:37.5px;background:linear-gradient(180deg,#e4e0dc,#dcd7d2);border-radius:8px 8px 0 0;border-bottom:1px solid #c4beb8;box-shadow:inset 0 1px 0 #f2efec"></div><span style="position:absolute;white-space:pre;left:1213.8px;top:243.0px;font-size:14px;line-height:18px;letter-spacing:0.05px;font-weight:bold;color:#2e3436;">Serwery CDDB:</span>
<div style="position:absolute;left:1528px;top:253.1px;width:8px;height:2.4px;background:#2e3436"></div><div style="position:absolute;left:1562px;top:247.3px;width:8px;height:8px;border:2px solid #2e3436"></div><svg style="position:absolute;left:1595px;top:246.3px" width="10" height="10" viewBox="0 0 10 10"><path d="M1.3 1.3 L8.7 8.7 M8.7 1.3 L1.3 8.7" stroke="#2e3436" stroke-width="1.8"/></svg>
<div style="position:absolute;left:928px;top:286px;width:674px;height:49px;background:#fff;border:1px solid;border-color:#000 #fff #fff #000"></div>
<div style="position:absolute;left:929px;top:287px;width:129px;height:26px;background:#d6d6d6;border:1px solid;border-color:#fff #000 #000 #fff;box-shadow:inset -1px -1px 0 #b9b9b9"></div>
<div style="position:absolute;left:1058px;top:287px;width:193px;height:26px;background:#d6d6d6;border:1px solid;border-color:#fff #000 #000 #fff;box-shadow:inset -1px -1px 0 #b9b9b9"></div>
<div style="position:absolute;left:1251px;top:287px;width:179px;height:26px;background:#d6d6d6;border:1px solid;border-color:#fff #000 #000 #fff;box-shadow:inset -1px -1px 0 #b9b9b9"></div>
<div style="position:absolute;left:1430px;top:287px;width:171px;height:26px;background:#d6d6d6;border:1px solid;border-color:#fff #000 #000 #fff;box-shadow:inset -1px -1px 0 #b9b9b9"></div>
<span style="position:absolute;white-space:pre;left:932.0px;top:289.2px;font-size:16px;line-height:21px;letter-spacing:-0.03px;">Serwer</span>
<span style="position:absolute;white-space:pre;left:1061.7px;top:289.2px;font-size:16px;line-height:21px;letter-spacing:0.11px;">Szeroko¶æ geograficzna</span>
<span style="position:absolute;white-space:pre;left:1253.7px;top:289.2px;font-size:16px;line-height:21px;letter-spacing:0.22px;">D³ugo¶æ geograficzna</span>
<span style="position:absolute;white-space:pre;left:1434.0px;top:289.2px;font-size:16px;line-height:21px;letter-spacing:-0.01px;">Opis</span>
<span style="position:absolute;white-space:pre;left:933.8px;top:313.4px;font-size:16px;line-height:21px;letter-spacing:-0.03px;">freedb.freedb.org</span>
<span style="position:absolute;white-space:pre;left:1068.4px;top:313.4px;font-size:16px;line-height:21px;letter-spacing:-0.12px;">000&#x27;N</span>
<span style="position:absolute;white-space:pre;left:1261.1px;top:313.4px;font-size:16px;line-height:21px;letter-spacing:-0.33px;">000&#x27;W</span>
<span style="position:absolute;white-space:pre;left:1435.1px;top:313.4px;font-size:16px;line-height:21px;letter-spacing:0.12px;">Random freedb server</span>
<div style="position:absolute;left:913px;top:351px;width:705px;height:1px;background:#8f8f8f"></div>
<div style="position:absolute;left:913px;top:352px;width:705px;height:1px;background:#fff"></div>
<div style="position:absolute;left:1433px;top:363px;width:86px;height:37px;border:1px solid;border-color:#000 #fff #fff #000;box-shadow:inset 1px 1px 0 #b9b9b9"></div><div style="position:absolute;left:1438px;top:368px;width:76px;height:27px;background:#d6d6d6;border:1px solid;border-color:#fff #000 #000 #fff;box-shadow:inset -1px -1px 0 #b9b9b9"></div><span style="position:absolute;white-space:pre;left:1464.0px;top:370.7px;font-size:16px;line-height:21px;letter-spacing:-0.90px;color:#000;">OK</span>
<div style="position:absolute;left:1528px;top:368px;width:76px;height:27px;background:#d6d6d6;border:1px solid;border-color:#fff #000 #000 #fff;box-shadow:inset -1px -1px 0 #b9b9b9"></div><span style="position:absolute;white-space:pre;left:1544.4px;top:370.7px;font-size:16px;line-height:21px;letter-spacing:-0.06px;color:#000;">Anuluj</span>
</div>
<div id="debug" style="position:absolute;left:0;top:0">
<div style="position:absolute;left:654.4px;top:788px;width:399.4px;height:186.3px;background:#d6d6d6;border-radius:7px 7px 0 0;box-shadow:0 0 0 1px rgba(0,0,0,.3),0 3px 12px rgba(0,0,0,.4)"></div>
<div style="position:absolute;left:654.4px;top:788px;width:399.4px;height:36.2px;background:#f6f5f4;border-radius:7px 7px 0 0;border-bottom:1px solid #dcd8d4;box-shadow:inset 0 1px 0 #fff"></div><span style="position:absolute;white-space:pre;left:784.7px;top:798.1px;font-size:14px;line-height:18px;letter-spacing:-0.03px;font-weight:bold;color:#919494;">CDDB networkdebug</span>
<div style="position:absolute;left:953.6px;top:792.4px;width:27.6px;height:27.6px;border-radius:50%;border:1px solid #dcd7d2;background:#f7f6f5"></div><div style="position:absolute;left:963.4px;top:808px;width:8px;height:2.4px;background:#8b8e8f"></div><div style="position:absolute;left:988px;top:792.4px;width:27.6px;height:27.6px;border-radius:50%;border:1px solid #dcd7d2;background:#f7f6f5"></div><div style="position:absolute;left:997.8px;top:802.2px;width:8px;height:8px;border:2px solid #8b8e8f"></div><div style="position:absolute;left:1021.8px;top:792.4px;width:27.6px;height:27.6px;border-radius:50%;border:1px solid #dcd7d2;background:#f7f6f5"></div><svg style="position:absolute;left:1030.6px;top:801.2px" width="10" height="10" viewBox="0 0 10 10"><path d="M1.3 1.3 L8.7 8.7 M8.7 1.3 L1.3 8.7" stroke="#8b8e8f" stroke-width="1.8"/></svg>
<div style="position:absolute;left:664px;top:835px;width:363px;height:65px;background:#fff;border:1px solid;border-color:#000 #fff #fff #000;box-shadow:inset 1px 1px 0 #000;overflow:hidden"></div>
<div style="position:absolute;left:666px;top:837px;width:359px;height:62px;overflow:hidden"><span style="position:absolute;white-space:pre;left:4.0px;top:-2.6px;font-size:16px;line-height:21px;letter-spacing:0.08px;">Getting cddb protocol level. Got level 6</span><span style="position:absolute;white-space:pre;left:4.0px;top:17.9px;font-size:16px;line-height:21px;letter-spacing:0.21px;">Connecting to CDDB-server freedb.freedb.org: OK</span><span style="position:absolute;white-space:pre;left:4.2px;top:37.4px;font-size:16px;line-height:21px;letter-spacing:0.09px;">Sending sites-command</span></div>
<div style="position:absolute;left:1029px;top:835px;width:16px;height:65px;background:#c3c3c3;border:1px solid;border-color:#000 #fff #fff #000;box-shadow:inset 1px 1px 0 #b9b9b9"></div>
<svg style="position:absolute;left:1031px;top:837.5px" width="12" height="12" viewBox="0 0 12 12"><path d="M1 10 L6 1 L11 10 Z" fill="#d6d6d6" stroke="#000" stroke-width="1"/></svg>
<div style="position:absolute;left:1031px;top:856px;width:13px;height:24px;background:#d6d6d6;border:1px solid;border-color:#fff #000 #000 #fff;box-shadow:inset -1px -1px 0 #b9b9b9"></div>
<svg style="position:absolute;left:1031px;top:885.5px" width="12" height="12" viewBox="0 0 12 12"><path d="M1 1 L6 10 L11 1 Z" fill="#d6d6d6" stroke="#000" stroke-width="1"/></svg>
<div style="position:absolute;left:664px;top:904px;width:363px;height:14px;background:#c3c3c3;border:1px solid;border-color:#000 #fff #fff #000;box-shadow:inset 1px 1px 0 #b9b9b9"></div>
<svg style="position:absolute;left:666px;top:905px" width="12" height="12" viewBox="0 0 12 12"><path d="M10 1 L1 6 L10 11 Z" fill="#d6d6d6" stroke="#000" stroke-width="1"/></svg>
<div style="position:absolute;left:677px;top:905px;width:240px;height:12px;background:#d6d6d6;border:1px solid;border-color:#fff #000 #000 #fff;box-shadow:inset -1px -1px 0 #b9b9b9"></div>
<svg style="position:absolute;left:1013px;top:905px" width="12" height="12" viewBox="0 0 12 12"><path d="M1 1 L10 6 L1 11 Z" fill="#d6d6d6" stroke="#000" stroke-width="1"/></svg>
<div style="position:absolute;left:810px;top:928px;width:88px;height:37px;border:1px solid;border-color:#000 #fff #fff #000;box-shadow:inset 1px 1px 0 #b9b9b9"></div><div style="position:absolute;left:815px;top:933px;width:78px;height:27px;background:#d6d6d6;border:1px solid;border-color:#fff #000 #000 #fff;box-shadow:inset -1px -1px 0 #b9b9b9"></div><span style="position:absolute;white-space:pre;left:825.9px;top:936.2px;font-size:16px;line-height:21px;letter-spacing:-0.03px;color:#000;">Zamknij</span>
</div>
<div id="bot">
<div class="task" style="left:0px;width:260px"><svg style="position:absolute;left:4px;top:3px" width="24" height="25" viewBox="0 0 24 25"><defs><linearGradient id="ffg" x1="0.7" y1="0" x2="0.3" y2="1"><stop offset="0" stop-color="#d8b030"/><stop offset=".45" stop-color="#e07820"/><stop offset=".8" stop-color="#d02848"/><stop offset="1" stop-color="#c01860"/></linearGradient></defs><path d="M13.5 1.5 C17 3 22.5 8 22.5 14 A10.5 10.5 0 0 1 1.5 14 C1.5 10 3 7 4.5 5.5 C5 7 6 8 7 8.5 C8 5 11 3.5 13.5 1.5 Z" fill="url(#ffg)"/><circle cx="11.5" cy="13.5" r="4.6" fill="#5a38c8"/><path d="M5 9 C8 9 9 11 12 11 C9 12 8 15 9.5 17.5 C6 16 4.5 13 5 9 Z" fill="#e8862a"/></svg><span style="position:absolute;white-space:pre;left:31.9px;top:6.7px;font-size:13.5px;line-height:18px;letter-spacing:-0.28px;font-weight:bold;color:#dedede;">[Prince - MusicBrainz - Mozilla Fir...</span></div>
<div class="task" style="left:264px;width:261px"><svg style="position:absolute;left:5px;top:3px" width="26" height="27" viewBox="0 0 26 27"><circle cx="11.5" cy="12" r="9.5" fill="none" stroke="#e8485a" stroke-width="1.2"/><path d="M17 2 L23 8 L18 12 L14.5 9 Z" fill="#7a1020" stroke="#f05868" stroke-width="1.1"/><path d="M14.5 9 C12 11 12 13 10 14" stroke="#f05868" stroke-width="1.1" fill="none"/><rect x="1" y="16.5" width="21" height="9" fill="#0a0a0a"/><text x="1.5" y="24" font-family="Liberation Sans" font-weight="bold" font-size="10.5" fill="#8cc8f4">grip</text></svg><span style="position:absolute;white-space:pre;left:33.7px;top:6.7px;font-size:13.5px;line-height:18px;letter-spacing:-0.63px;font-weight:bold;color:#dedede;">Grip</span></div>
<div class="task" style="left:529px;width:262px"><svg style="position:absolute;left:9px;top:4px" width="22" height="25" viewBox="0 0 22 25"><rect x="1" y="1.3" width="16.5" height="21.7" rx="1.5" fill="#f6f6f2"/><path d="M4.2 18.6 L15.5 4.5 L19 7.6 L7.6 20.6 L3.6 21.2 Z" fill="#f5c518"/></svg><span style="position:absolute;white-space:pre;left:33.3px;top:6.7px;font-size:13.5px;line-height:18px;letter-spacing:-0.45px;font-weight:bold;color:#dedede;">Edytor tekstu</span></div>
<div class="task" style="left:796px;width:262px"><div style="position:absolute;left:5px;top:3px;width:24px;height:24px;background:linear-gradient(140deg,#343288 0,#4c4cb0 40%,#6a72d8 70%,#e8eaff 96%);overflow:hidden"><span style="position:absolute;left:2px;top:8px;font-size:9px;line-height:9px;color:#eee;font-weight:bold;font-style:italic;letter-spacing:-.3px">MMS</span></div><span style="position:absolute;white-space:pre;left:33.6px;top:6.7px;font-size:13.5px;line-height:18px;letter-spacing:-0.05px;font-weight:bold;color:#dedede;">XMMS</span></div>
<div style="position:absolute;left:1436px;top:3px;width:55px;height:27px;background:#3c3c3c;border-radius:5px 0 0 5px;border:1px solid #4a4a4a"></div>
<div style="position:absolute;left:1493px;top:3px;width:54px;height:27px;background:#000;border:1px solid #cfcfcf"></div>
<div style="position:absolute;left:1550px;top:3px;width:54px;height:27px;background:#000;border:1px solid #cfcfcf"></div>
<div style="position:absolute;left:1607px;top:3px;width:55px;height:27px;background:#000;border:1px solid #cfcfcf;border-radius:0 5px 5px 0"></div>
<div style="position:absolute;left:1478px;top:6px;width:13px;height:6px;background:#d8d8d8"></div>
<div style="position:absolute;left:1480px;top:8px;width:9px;height:2px;background:#444"></div>
<div style="position:absolute;left:1478px;top:13px;width:13px;height:15px;background:#333;border:1px solid #dcdcdc"></div>
</div>

</div>
</body></html>
